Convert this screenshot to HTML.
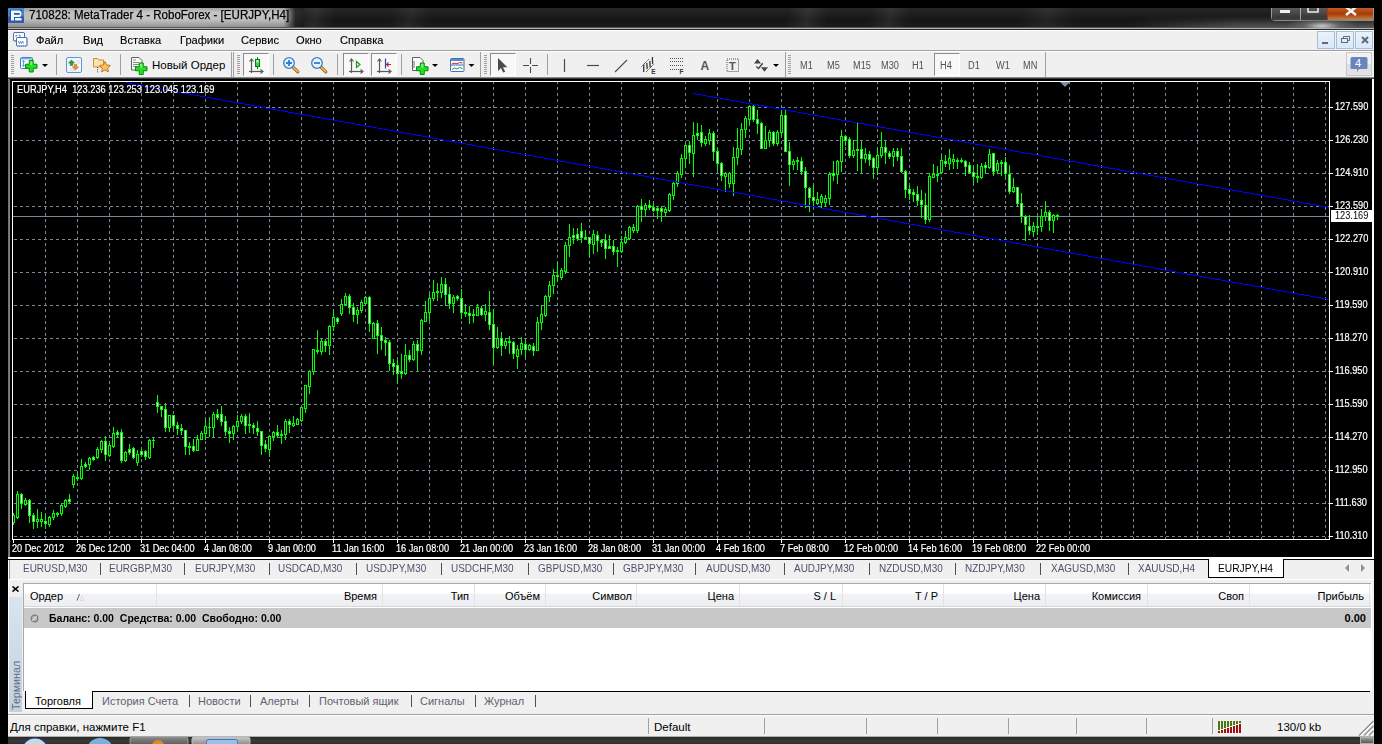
<!DOCTYPE html>
<html><head><meta charset="utf-8"><style>
html,body{margin:0;padding:0;}
body{width:1382px;height:744px;background:#000;position:relative;overflow:hidden;font-family:"Liberation Sans", sans-serif;}
.t{position:absolute;white-space:nowrap;line-height:1.15;font-family:"Liberation Sans", sans-serif;}
.b{position:absolute;}
</style></head><body>
<div class="b" style="left:8px;top:8px;width:1366px;height:20px;background:linear-gradient(#262626,#161616 60%,#1c1c1c);"></div><div class="b" style="left:8px;top:8px;width:1366px;height:20px;background:linear-gradient(100deg, rgba(255,255,255,0) 21%, rgba(255,255,255,.07) 22.5%, rgba(255,255,255,0) 24%, rgba(255,255,255,0) 28%, rgba(255,255,255,.06) 29.5%, rgba(255,255,255,0) 31%, rgba(255,255,255,0) 57%, rgba(255,255,255,.08) 58.5%, rgba(255,255,255,0) 60%, rgba(255,255,255,0) 63%, rgba(255,255,255,.07) 64.5%, rgba(255,255,255,0) 66%, rgba(255,255,255,0) 74%, rgba(255,255,255,.06) 76%, rgba(255,255,255,0) 78%);"></div><div class="b" style="left:8px;top:8px;width:296px;height:20px;background:linear-gradient(to bottom, rgba(0,0,0,.18) 0%, rgba(0,0,0,0) 22%, rgba(0,0,0,0) 55%, rgba(0,0,0,.28) 100%), linear-gradient(to right, #bcbcbc 0%, #c6c6c6 50%, #c0c0c0 93%, rgba(60,60,60,0.5) 97%, rgba(30,30,30,0) 100%);"></div><div class="b" style="left:8px;top:27px;width:1366px;height:1px;background:#555;"></div><div class="b" style="left:8px;top:28px;width:1366px;height:1px;background:#b4b4b4;"></div><svg class="b" style="left:8px;top:8px" width="16" height="15" viewBox="0 0 16 15">
<rect x="0" y="0" width="16" height="15" fill="#3a5cb0"/>
<rect x="0.5" y="0.5" width="15" height="8" fill="#6aa8e8"/>
<rect x="1.5" y="1.5" width="13" height="12" fill="#1f58a8"/>
<path d="M3 2.5 h8 a2.5 2.5 0 0 1 2.5 2.5 v1.5 a2.5 2.5 0 0 1 -2.5 2.5 h-5 v3.5 h-3z M6 5 v1.8 h5 a.9 .9 0 0 0 0 -1.8z" fill="#f4f8ff" fill-rule="evenodd"/>
<path d="M7 10 h6.5 v2.5 h-6.5z" fill="#f4f8ff"/>
</svg><div class="t" style="left:29px;top:9px;font-size:12px;color:#000;transform:scaleX(0.963);transform-origin:0 0;-webkit-text-stroke:0.25px #000;">710828: MetaTrader 4 - RoboForex - [EURJPY,H4]</div><svg class="b" style="left:1271px;top:8px" width="103" height="14" viewBox="0 0 103 14">
<path d="M0.5 0 V9.5 Q0.5 12.5 3.5 12.5 H102.5 V0" fill="#3a3a3a" stroke="#9a9a9a"/>
<rect x="1" y="0" width="28" height="12" fill="url(#gb)"/>
<rect x="30" y="0" width="26" height="12" fill="url(#gb)"/>
<line x1="29.5" y1="0" x2="29.5" y2="12" stroke="#aaa"/>
<line x1="56.5" y1="0" x2="56.5" y2="12" stroke="#c03000"/>
<rect x="57" y="0" width="45" height="12" fill="url(#gc)"/>
<rect x="9" y="2" width="10" height="3" fill="#f0f0f0"/>
<rect x="37" y="-1" width="10" height="5" fill="none" stroke="#f0f0f0" stroke-width="1.5"/>
<path d="M75 -1 L85 7 M85 -1 L75 7" stroke="#f4f4f4" stroke-width="2.5"/>
<defs>
<linearGradient id="gb" x1="0" y1="0" x2="0" y2="1"><stop offset="0" stop-color="#5a5a5a"/><stop offset="1" stop-color="#2e2e2e"/></linearGradient>
<linearGradient id="gc" x1="0" y1="0" x2="0" y2="1"><stop offset="0" stop-color="#c45a20"/><stop offset="0.5" stop-color="#a43c08"/><stop offset="1" stop-color="#d48a4a"/></linearGradient>
</defs>
</svg><div class="b" style="left:1130px;top:16px;width:244px;height:11px;background:linear-gradient(to bottom, rgba(90,90,90,0) 0%, rgba(100,100,100,.75) 100%);-webkit-mask-image:linear-gradient(to right, transparent 0%, #000 45%);"></div><div class="b" style="left:1240px;top:20px;width:134px;height:8px;background:radial-gradient(ellipse 36px 9px at 82px 6px, #c8c8c8, rgba(110,110,110,0.7) 50%, rgba(30,30,30,0) 100%);"></div><div class="b" style="left:8px;top:29px;width:1366px;height:1px;background:#2a2a2a;"></div><div class="b" style="left:8px;top:30px;width:1366px;height:1px;background:#fff;"></div><div class="b" style="left:8px;top:31px;width:1366px;height:19px;background:#f0f0f0;"></div><div class="b" style="left:8px;top:50px;width:1366px;height:1px;background:#a0a0a0;"></div><div class="b" style="left:8px;top:51px;width:1366px;height:1px;background:#fff;"></div><svg class="b" style="left:13px;top:32px" width="15" height="15" viewBox="0 0 15 15">
<rect x="0.5" y="0.5" width="11" height="8.5" rx="1" fill="#fff" stroke="#4a8af0" stroke-width="1"/>
<rect x="0.5" y="0.5" width="11" height="8.5" rx="1" fill="none" stroke="#555" stroke-width="1" stroke-dasharray="1 1"/>
<path d="M2.5 4.5 l1.5 -1.5 M6 3 l1.5 1.5" stroke="#4a8af0" stroke-width="1.2"/>
<rect x="3.5" y="5.5" width="10.5" height="8.5" rx="1" fill="#fff" stroke="#4a8af0" stroke-width="1"/>
<rect x="3.5" y="5.5" width="10.5" height="8.5" rx="1" fill="none" stroke="#555" stroke-width="1" stroke-dasharray="1 1"/>
<path d="M5.5 9 l1 2.5 l1 -2 l1 2 l1 -2.5 l1 2.5" fill="none" stroke="#4a8af0" stroke-width="1"/>
</svg><div class="t" style="left:36px;top:34px;font-size:11.5px;color:#000;transform:scaleX(0.965);transform-origin:0 0;-webkit-text-stroke:0.15px #000;">Файл</div><div class="t" style="left:83px;top:34px;font-size:11.5px;color:#000;transform:scaleX(0.965);transform-origin:0 0;-webkit-text-stroke:0.15px #000;">Вид</div><div class="t" style="left:120px;top:34px;font-size:11.5px;color:#000;transform:scaleX(0.965);transform-origin:0 0;-webkit-text-stroke:0.15px #000;">Вставка</div><div class="t" style="left:180px;top:34px;font-size:11.5px;color:#000;transform:scaleX(0.965);transform-origin:0 0;-webkit-text-stroke:0.15px #000;">Графики</div><div class="t" style="left:241px;top:34px;font-size:11.5px;color:#000;transform:scaleX(0.965);transform-origin:0 0;-webkit-text-stroke:0.15px #000;">Сервис</div><div class="t" style="left:296px;top:34px;font-size:11.5px;color:#000;transform:scaleX(0.965);transform-origin:0 0;-webkit-text-stroke:0.15px #000;">Окно</div><div class="t" style="left:340px;top:34px;font-size:11.5px;color:#000;transform:scaleX(0.965);transform-origin:0 0;-webkit-text-stroke:0.15px #000;">Справка</div><div class="b" style="left:1317px;top:31px;width:18px;height:18px;background:linear-gradient(#eaf2fb,#dae8f7);border:1px solid #a9bdd6;box-sizing:border-box;"></div><div class="b" style="left:1336px;top:31px;width:18px;height:18px;background:linear-gradient(#eaf2fb,#dae8f7);border:1px solid #a9bdd6;box-sizing:border-box;"></div><div class="b" style="left:1355px;top:31px;width:18px;height:18px;background:linear-gradient(#eaf2fb,#dae8f7);border:1px solid #a9bdd6;box-sizing:border-box;"></div><svg class="b" style="left:1317px;top:31px" width="56" height="18" viewBox="0 0 56 18">
<rect x="5" y="11" width="6" height="2" fill="#5b6b7b"/>
<rect x="24.5" y="7.5" width="6" height="4" fill="none" stroke="#5b6b7b"/>
<path d="M26.5 7.5 v-2 h6 v4 h-2" fill="none" stroke="#5b6b7b"/>
<path d="M45 6 l6 6 M51 6 l-6 6" stroke="#5b6b7b" stroke-width="2"/>
</svg><div class="b" style="left:8px;top:52px;width:1366px;height:25px;background:#f0f0f0;"></div><div class="b" style="left:8px;top:77px;width:1366px;height:1px;background:#8a8a8a;"></div><div class="b" style="left:8px;top:78px;width:1366px;height:1px;background:#383838;"></div><svg class="b" style="left:11px;top:55px" width="3" height="20"><g fill="#a0a0a0"><rect x="0" y="0" width="3" height="1"/><rect x="0" y="2" width="3" height="1"/><rect x="0" y="4" width="3" height="1"/><rect x="0" y="6" width="3" height="1"/><rect x="0" y="8" width="3" height="1"/><rect x="0" y="10" width="3" height="1"/><rect x="0" y="12" width="3" height="1"/><rect x="0" y="14" width="3" height="1"/><rect x="0" y="16" width="3" height="1"/><rect x="0" y="18" width="3" height="1"/></g></svg><div class="b" style="left:56px;top:54px;width:1px;height:21px;background:#a0a0a0;"></div><div class="b" style="left:120px;top:54px;width:1px;height:21px;background:#a0a0a0;"></div><div class="b" style="left:231px;top:52px;width:1px;height:25px;background:#a0a0a0;"></div><div class="b" style="left:233px;top:52px;width:1px;height:25px;background:#a0a0a0;"></div><svg class="b" style="left:237px;top:55px" width="3" height="20"><g fill="#a0a0a0"><rect x="0" y="0" width="3" height="1"/><rect x="0" y="2" width="3" height="1"/><rect x="0" y="4" width="3" height="1"/><rect x="0" y="6" width="3" height="1"/><rect x="0" y="8" width="3" height="1"/><rect x="0" y="10" width="3" height="1"/><rect x="0" y="12" width="3" height="1"/><rect x="0" y="14" width="3" height="1"/><rect x="0" y="16" width="3" height="1"/><rect x="0" y="18" width="3" height="1"/></g></svg><div class="b" style="left:243px;top:53px;width:26px;height:23px;background:#f8f8f8;border-top:1px solid #8c8c8c;border-left:1px solid #8c8c8c;border-right:1px solid #fff;border-bottom:1px solid #fff;box-sizing:border-box;"></div><div class="b" style="left:273px;top:54px;width:1px;height:21px;background:#a0a0a0;"></div><div class="b" style="left:337px;top:54px;width:1px;height:21px;background:#a0a0a0;"></div><div class="b" style="left:343px;top:53px;width:26px;height:23px;background:#f8f8f8;border-top:1px solid #8c8c8c;border-left:1px solid #8c8c8c;border-right:1px solid #fff;border-bottom:1px solid #fff;box-sizing:border-box;"></div><div class="b" style="left:371px;top:53px;width:26px;height:23px;background:#f8f8f8;border-top:1px solid #8c8c8c;border-left:1px solid #8c8c8c;border-right:1px solid #fff;border-bottom:1px solid #fff;box-sizing:border-box;"></div><div class="b" style="left:401px;top:54px;width:1px;height:21px;background:#a0a0a0;"></div><div class="b" style="left:480px;top:52px;width:1px;height:25px;background:#a0a0a0;"></div><svg class="b" style="left:484px;top:55px" width="3" height="20"><g fill="#a0a0a0"><rect x="0" y="0" width="3" height="1"/><rect x="0" y="2" width="3" height="1"/><rect x="0" y="4" width="3" height="1"/><rect x="0" y="6" width="3" height="1"/><rect x="0" y="8" width="3" height="1"/><rect x="0" y="10" width="3" height="1"/><rect x="0" y="12" width="3" height="1"/><rect x="0" y="14" width="3" height="1"/><rect x="0" y="16" width="3" height="1"/><rect x="0" y="18" width="3" height="1"/></g></svg><div class="b" style="left:490px;top:53px;width:26px;height:23px;background:#f8f8f8;border-top:1px solid #8c8c8c;border-left:1px solid #8c8c8c;border-right:1px solid #fff;border-bottom:1px solid #fff;box-sizing:border-box;"></div><div class="b" style="left:547px;top:54px;width:1px;height:21px;background:#a0a0a0;"></div><div class="b" style="left:785px;top:52px;width:1px;height:25px;background:#a0a0a0;"></div><svg class="b" style="left:788px;top:55px" width="3" height="20"><g fill="#a0a0a0"><rect x="0" y="0" width="3" height="1"/><rect x="0" y="2" width="3" height="1"/><rect x="0" y="4" width="3" height="1"/><rect x="0" y="6" width="3" height="1"/><rect x="0" y="8" width="3" height="1"/><rect x="0" y="10" width="3" height="1"/><rect x="0" y="12" width="3" height="1"/><rect x="0" y="14" width="3" height="1"/><rect x="0" y="16" width="3" height="1"/><rect x="0" y="18" width="3" height="1"/></g></svg><div class="b" style="left:934px;top:53px;width:26px;height:23px;background:#f8f8f8;border-top:1px solid #8c8c8c;border-left:1px solid #8c8c8c;border-right:1px solid #fff;border-bottom:1px solid #fff;box-sizing:border-box;"></div><div class="b" style="left:1045px;top:52px;width:1px;height:25px;background:#a0a0a0;"></div><svg class="b" style="left:0;top:0" width="1382" height="78" viewBox="0 0 1382 78" shape-rendering="geometricPrecision"><rect x="20.5" y="57.5" width="12" height="11" rx="1" fill="#f4f8fd" stroke="#3f7fcf"/><rect x="21" y="58" width="11" height="1.5" fill="#7fb0e8"/><path d="M23.5 60.5 v6 M22.2 61.8 l1.3 -1.3 l1.3 1.3 M22.2 65.2 l1.3 1.3 l1.3 -1.3" stroke="#5a8fd0" fill="none" stroke-width=".9"/><path d="M29.25 60.5 h4 v3.75 h3.75 v4 h-3.75 v3.75 h-4 v-3.75 h-3.75 v-4 h3.75z" fill="#22e022" stroke="#0a8a0a" stroke-width="1" stroke-linejoin="miter"/><rect x="30.05" y="61.3" width="2.4" height="3.75" fill="#b8f8b8" opacity=".6"/><path d="M42 64 h6 l-3 3z" fill="#000"/><rect x="66.5" y="57.5" width="15" height="15" rx="1.5" fill="#f2f6fb" stroke="#5f96d8"/><path d="M76 61 h4 M76 63 h4 M70 69 h5 M70 70.5 h5" stroke="#d8dde4"/><path d="M71.5 60 l3 3 h-1.8 v2.5 h-2.4 v-2.5 h-1.8z" fill="#2e9a3e" stroke="#1e7a2e" stroke-width=".6"/><path d="M75.5 70 l3 -3 h-1.8 v-2.5 h-2.4 v2.5 h-1.8z" fill="#e8903a" stroke="#b86a1a" stroke-width=".6"/><path d="M93.5 58.5 h4 l1.5 1.5 h4.5 v7 h-10z" fill="#fbe3a8" stroke="#c8903a"/><path d="M97.6 67 v6" stroke="#404040" stroke-dasharray="1 1.2"/><path d="M105 61.5 l1.7 3.5 l3.8 .5 l-2.8 2.6 l.7 3.8 l-3.4 -1.9 l-3.4 1.9 l.7 -3.8 l-2.8 -2.6 l3.8 -.5z" fill="#f8c060" stroke="#c87a20"/><path d="M131.5 57.5 h7.5 l3 3 v9.5 h-10.5z" fill="#fafafa" stroke="#606060"/><path d="M133 60 h3 M133 62.5 h6 M133 64.5 h6 M133 66.5 h4" stroke="#8a8a8a"/><path d="M139.25 63 h4 v3.75 h3.75 v4 h-3.75 v3.75 h-4 v-3.75 h-3.75 v-4 h3.75z" fill="#22e022" stroke="#0a8a0a" stroke-width="1" stroke-linejoin="miter"/><rect x="140.05" y="63.8" width="2.4" height="3.75" fill="#b8f8b8" opacity=".6"/><path d="M251.5 59 V73" stroke="#5a5a5a" stroke-width="1.2"/><path d="M249.5 61.5 L251.5 59 L253.5 61.5" fill="none" stroke="#5a5a5a" stroke-width="1.1"/><path d="M249 71.5 H263" stroke="#5a5a5a" stroke-width="1.2"/><path d="M260.5 69.5 L263 71.5 L260.5 73.5" fill="none" stroke="#5a5a5a" stroke-width="1.1"/><path d="M257.5 57 v12" stroke="#0a7a0a"/><rect x="255.5" y="59.5" width="4" height="7" fill="#30e030" stroke="#0a7a0a"/><rect x="256" y="60" width="3" height="2.5" fill="#b0e8b0"/><path d="M292.8 66.8 l5 5" stroke="#a05a10" stroke-width="3.2" stroke-linecap="round"/><path d="M292.8 66.8 l5 5" stroke="#f0c060" stroke-width="1.6" stroke-linecap="round"/><circle cx="289" cy="63" r="5.3" fill="#e4f4fc" stroke="#3a7ccc" stroke-width="1.3"/><path d="M286 63 h6 M289 60 v6" stroke="#3a7ccc" stroke-width="1.8"/><path d="M320.8 66.8 l5 5" stroke="#a05a10" stroke-width="3.2" stroke-linecap="round"/><path d="M320.8 66.8 l5 5" stroke="#f0c060" stroke-width="1.6" stroke-linecap="round"/><circle cx="317" cy="63" r="5.3" fill="#e4f4fc" stroke="#3a7ccc" stroke-width="1.3"/><path d="M314 63 h6" stroke="#3a7ccc" stroke-width="1.8"/><path d="M351.5 59 V73" stroke="#5a5a5a" stroke-width="1.2"/><path d="M349.5 61.5 L351.5 59 L353.5 61.5" fill="none" stroke="#5a5a5a" stroke-width="1.1"/><path d="M349 71.5 H363" stroke="#5a5a5a" stroke-width="1.2"/><path d="M360.5 69.5 L363 71.5 L360.5 73.5" fill="none" stroke="#5a5a5a" stroke-width="1.1"/><path d="M356.5 61.5 l3.5 3 l-3.5 3z" fill="none" stroke="#1a9a1a" stroke-width="1.2"/><path d="M379.5 59 V73" stroke="#5a5a5a" stroke-width="1.2"/><path d="M377.5 61.5 L379.5 59 L381.5 61.5" fill="none" stroke="#5a5a5a" stroke-width="1.1"/><path d="M377 71.5 H391" stroke="#5a5a5a" stroke-width="1.2"/><path d="M388.5 69.5 L391 71.5 L388.5 73.5" fill="none" stroke="#5a5a5a" stroke-width="1.1"/><path d="M385.5 58.5 v10" stroke="#1a4ab0" stroke-width="1.2"/><path d="M391 64.5 h-4.5 M388.5 62.5 l-2 2 l2 2" fill="none" stroke="#c02020" stroke-width="1.1"/><path d="M412.5 57.5 h7.5 l3 3 v10 h-10.5z" fill="#fafafa" stroke="#606060"/><path d="M414 61 v7" stroke="#707070"/><path d="M420.25 63 h4 v3.75 h3.75 v4 h-3.75 v3.75 h-4 v-3.75 h-3.75 v-4 h3.75z" fill="#22e022" stroke="#0a8a0a" stroke-width="1" stroke-linejoin="miter"/><rect x="421.05" y="63.8" width="2.4" height="3.75" fill="#b8f8b8" opacity=".6"/><path d="M432 64 h6 l-3 3z" fill="#000"/><rect x="450.5" y="58.5" width="13.5" height="13" rx="1" fill="#fafcff" stroke="#3f6fb8"/><rect x="451" y="59" width="12.5" height="2" fill="#5a8ad0"/><path d="M451 65 h12.5" stroke="#3f6fb8"/><path d="M452 63.8 l2.5 -.6 l2.5 .6 l2.5 -1.2 l3 .3" fill="none" stroke="#c03020"/><path d="M452 69.5 l2.5 -1.5 l2.5 1 l2.5 -1.5 l3 1.2" fill="none" stroke="#20a030"/><path d="M468.5 64 h6 l-3 3z" fill="#000"/><path d="M498 58 v13 l3 -3 l2.2 4.6 l2 -.9 l-2.2 -4.5 h4.3z" fill="#4a4a4a"/><path d="M530.5 58 v6 M530.5 67 v6 M523 65.5 h6 M532 65.5 h6" stroke="#4a4a4a" stroke-width="1.1"/><path d="M564.5 59 v13" stroke="#4a4a4a" stroke-width="1.2"/><path d="M587 65.5 h12" stroke="#4a4a4a" stroke-width="1.2"/><path d="M615 72 l12 -12" stroke="#4a4a4a" stroke-width="1.1"/><path d="M641.5 66.5 L649 59 M646 72 L654 64" stroke="#444" stroke-width="1" stroke-dasharray="1.2 .6"/><path d="M643.5 72 C644.5 69 643 67 644 64.5 M647 69 C647.5 67 646.5 65 647 63 M650 67.5 C650.5 65 649.5 63 650 61 M652.5 64 C653 62 652 60 652.5 57" stroke="#333" stroke-width="1.3" fill="none"/><text x="651.3" y="73.8" font-size="6.5" font-weight="bold" fill="#333" font-family="Liberation Sans">E</text><path d="M670 58.5 h13 M670 61.5 h13 M670 65.5 h13 M670 69.5 h9" stroke="#555" stroke-dasharray="1 1"/><text x="679.6" y="73.8" font-size="6.5" font-weight="bold" fill="#333" font-family="Liberation Sans">F</text><text x="700.5" y="70" font-size="12" font-weight="bold" fill="#555" font-family="Liberation Sans">A</text><rect x="727" y="59" width="11.5" height="12.5" fill="none" stroke="#555" stroke-dasharray="1 1"/><text x="729" y="70" font-size="11" font-weight="bold" fill="#555" font-family="Liberation Sans">T</text><path d="M754 63.5 l3.5 -4.5 l3.5 4.5z M761 67.3 h7 l-3.5 4.5z" fill="#444"/><path d="M756.3 66.4 l2.3 2.1 l4.1 -5.3" fill="none" stroke="#444" stroke-width="1.4"/><path d="M773 64 h6 l-3 3z" fill="#000"/><rect x="1346.5" y="52.5" width="25" height="23" fill="url(#g4)" stroke="#c8c8c8"/><path d="M1352 57 h14 a1.5 1.5 0 0 1 1.5 1.5 v9 a1.5 1.5 0 0 1 -1.5 1.5 h-7 l-2 3 v-3 h-5 a1.5 1.5 0 0 1 -1.5 -1.5 v-9 a1.5 1.5 0 0 1 1.5 -1.5z" fill="#6a84be"/><text x="1355" y="67" font-size="11" fill="#fff" font-family="Liberation Sans">4</text><defs><linearGradient id="g4" x1="0" y1="0" x2="0" y2="1"><stop offset="0" stop-color="#f2f2f2"/><stop offset=".5" stop-color="#f2f2f2"/><stop offset=".5" stop-color="#dedede"/><stop offset="1" stop-color="#e4e4e4"/></linearGradient></defs></svg><div class="t" style="left:152px;top:59px;font-size:11.5px;color:#000;">Новый Ордер</div><div class="t" style="left:800px;top:60px;font-size:10px;color:#505050;transform:scaleX(0.92);transform-origin:0 0;">M1</div><div class="t" style="left:827px;top:60px;font-size:10px;color:#505050;transform:scaleX(0.92);transform-origin:0 0;">M5</div><div class="t" style="left:853px;top:60px;font-size:10px;color:#505050;transform:scaleX(0.92);transform-origin:0 0;">M15</div><div class="t" style="left:881px;top:60px;font-size:10px;color:#505050;transform:scaleX(0.92);transform-origin:0 0;">M30</div><div class="t" style="left:912px;top:60px;font-size:10px;color:#505050;transform:scaleX(0.92);transform-origin:0 0;">H1</div><div class="t" style="left:940px;top:60px;font-size:10px;color:#505050;transform:scaleX(0.92);transform-origin:0 0;">H4</div><div class="t" style="left:968px;top:60px;font-size:10px;color:#505050;transform:scaleX(0.92);transform-origin:0 0;">D1</div><div class="t" style="left:996px;top:60px;font-size:10px;color:#505050;transform:scaleX(0.92);transform-origin:0 0;">W1</div><div class="t" style="left:1023px;top:60px;font-size:10px;color:#505050;transform:scaleX(0.92);transform-origin:0 0;">MN</div><div class="b" style="left:8px;top:79px;width:1366px;height:480px;background:#000;"></div><div class="b" style="left:8px;top:79px;width:2px;height:478px;background:linear-gradient(to right,#6a6a6a,#8a8a8a);"></div><svg class="b" style="left:0;top:0" width="1382" height="560" viewBox="0 0 1382 560" shape-rendering="crispEdges"><line x1="14" y1="107.5" x2="1329" y2="107.5" stroke="#778899" stroke-dasharray="3 3"/><line x1="14" y1="140.5" x2="1329" y2="140.5" stroke="#778899" stroke-dasharray="3 3"/><line x1="14" y1="173.5" x2="1329" y2="173.5" stroke="#778899" stroke-dasharray="3 3"/><line x1="14" y1="206.5" x2="1329" y2="206.5" stroke="#778899" stroke-dasharray="3 3"/><line x1="14" y1="239.5" x2="1329" y2="239.5" stroke="#778899" stroke-dasharray="3 3"/><line x1="14" y1="272.5" x2="1329" y2="272.5" stroke="#778899" stroke-dasharray="3 3"/><line x1="14" y1="305.5" x2="1329" y2="305.5" stroke="#778899" stroke-dasharray="3 3"/><line x1="14" y1="338.5" x2="1329" y2="338.5" stroke="#778899" stroke-dasharray="3 3"/><line x1="14" y1="371.5" x2="1329" y2="371.5" stroke="#778899" stroke-dasharray="3 3"/><line x1="14" y1="404.5" x2="1329" y2="404.5" stroke="#778899" stroke-dasharray="3 3"/><line x1="14" y1="437.5" x2="1329" y2="437.5" stroke="#778899" stroke-dasharray="3 3"/><line x1="14" y1="470.5" x2="1329" y2="470.5" stroke="#778899" stroke-dasharray="3 3"/><line x1="14" y1="503.5" x2="1329" y2="503.5" stroke="#778899" stroke-dasharray="3 3"/><line x1="14" y1="536.5" x2="1329" y2="536.5" stroke="#778899" stroke-dasharray="3 3"/><line x1="45.5" y1="81" x2="45.5" y2="539" stroke="#778899" stroke-dasharray="3 3"/><line x1="77.5" y1="81" x2="77.5" y2="539" stroke="#778899" stroke-dasharray="3 3"/><line x1="109.5" y1="81" x2="109.5" y2="539" stroke="#778899" stroke-dasharray="3 3"/><line x1="141.5" y1="81" x2="141.5" y2="539" stroke="#778899" stroke-dasharray="3 3"/><line x1="173.5" y1="81" x2="173.5" y2="539" stroke="#778899" stroke-dasharray="3 3"/><line x1="205.5" y1="81" x2="205.5" y2="539" stroke="#778899" stroke-dasharray="3 3"/><line x1="237.5" y1="81" x2="237.5" y2="539" stroke="#778899" stroke-dasharray="3 3"/><line x1="269.5" y1="81" x2="269.5" y2="539" stroke="#778899" stroke-dasharray="3 3"/><line x1="301.5" y1="81" x2="301.5" y2="539" stroke="#778899" stroke-dasharray="3 3"/><line x1="333.5" y1="81" x2="333.5" y2="539" stroke="#778899" stroke-dasharray="3 3"/><line x1="365.5" y1="81" x2="365.5" y2="539" stroke="#778899" stroke-dasharray="3 3"/><line x1="397.5" y1="81" x2="397.5" y2="539" stroke="#778899" stroke-dasharray="3 3"/><line x1="429.5" y1="81" x2="429.5" y2="539" stroke="#778899" stroke-dasharray="3 3"/><line x1="461.5" y1="81" x2="461.5" y2="539" stroke="#778899" stroke-dasharray="3 3"/><line x1="493.5" y1="81" x2="493.5" y2="539" stroke="#778899" stroke-dasharray="3 3"/><line x1="525.5" y1="81" x2="525.5" y2="539" stroke="#778899" stroke-dasharray="3 3"/><line x1="557.5" y1="81" x2="557.5" y2="539" stroke="#778899" stroke-dasharray="3 3"/><line x1="589.5" y1="81" x2="589.5" y2="539" stroke="#778899" stroke-dasharray="3 3"/><line x1="621.5" y1="81" x2="621.5" y2="539" stroke="#778899" stroke-dasharray="3 3"/><line x1="653.5" y1="81" x2="653.5" y2="539" stroke="#778899" stroke-dasharray="3 3"/><line x1="685.5" y1="81" x2="685.5" y2="539" stroke="#778899" stroke-dasharray="3 3"/><line x1="717.5" y1="81" x2="717.5" y2="539" stroke="#778899" stroke-dasharray="3 3"/><line x1="749.5" y1="81" x2="749.5" y2="539" stroke="#778899" stroke-dasharray="3 3"/><line x1="781.5" y1="81" x2="781.5" y2="539" stroke="#778899" stroke-dasharray="3 3"/><line x1="813.5" y1="81" x2="813.5" y2="539" stroke="#778899" stroke-dasharray="3 3"/><line x1="845.5" y1="81" x2="845.5" y2="539" stroke="#778899" stroke-dasharray="3 3"/><line x1="877.5" y1="81" x2="877.5" y2="539" stroke="#778899" stroke-dasharray="3 3"/><line x1="909.5" y1="81" x2="909.5" y2="539" stroke="#778899" stroke-dasharray="3 3"/><line x1="941.5" y1="81" x2="941.5" y2="539" stroke="#778899" stroke-dasharray="3 3"/><line x1="973.5" y1="81" x2="973.5" y2="539" stroke="#778899" stroke-dasharray="3 3"/><line x1="1005.5" y1="81" x2="1005.5" y2="539" stroke="#778899" stroke-dasharray="3 3"/><line x1="1037.5" y1="81" x2="1037.5" y2="539" stroke="#778899" stroke-dasharray="3 3"/><line x1="1069.5" y1="81" x2="1069.5" y2="539" stroke="#778899" stroke-dasharray="3 3"/><line x1="1101.5" y1="81" x2="1101.5" y2="539" stroke="#778899" stroke-dasharray="3 3"/><line x1="1133.5" y1="81" x2="1133.5" y2="539" stroke="#778899" stroke-dasharray="3 3"/><line x1="1165.5" y1="81" x2="1165.5" y2="539" stroke="#778899" stroke-dasharray="3 3"/><line x1="1197.5" y1="81" x2="1197.5" y2="539" stroke="#778899" stroke-dasharray="3 3"/><line x1="1229.5" y1="81" x2="1229.5" y2="539" stroke="#778899" stroke-dasharray="3 3"/><line x1="1261.5" y1="81" x2="1261.5" y2="539" stroke="#778899" stroke-dasharray="3 3"/><line x1="1293.5" y1="81" x2="1293.5" y2="539" stroke="#778899" stroke-dasharray="3 3"/><line x1="1325.5" y1="81" x2="1325.5" y2="539" stroke="#778899" stroke-dasharray="3 3"/><rect x="1372" y="79" width="2" height="480" fill="#fff"/><rect x="8" y="557" width="1366" height="2" fill="#fff"/><line x1="1330" y1="107.5" x2="1333" y2="107.5" stroke="#fff"/><line x1="1330" y1="140.5" x2="1333" y2="140.5" stroke="#fff"/><line x1="1330" y1="173.5" x2="1333" y2="173.5" stroke="#fff"/><line x1="1330" y1="206.5" x2="1333" y2="206.5" stroke="#fff"/><line x1="1330" y1="239.5" x2="1333" y2="239.5" stroke="#fff"/><line x1="1330" y1="272.5" x2="1333" y2="272.5" stroke="#fff"/><line x1="1330" y1="305.5" x2="1333" y2="305.5" stroke="#fff"/><line x1="1330" y1="338.5" x2="1333" y2="338.5" stroke="#fff"/><line x1="1330" y1="371.5" x2="1333" y2="371.5" stroke="#fff"/><line x1="1330" y1="404.5" x2="1333" y2="404.5" stroke="#fff"/><line x1="1330" y1="437.5" x2="1333" y2="437.5" stroke="#fff"/><line x1="1330" y1="470.5" x2="1333" y2="470.5" stroke="#fff"/><line x1="1330" y1="503.5" x2="1333" y2="503.5" stroke="#fff"/><line x1="1330" y1="536.5" x2="1333" y2="536.5" stroke="#fff"/><line x1="13.5" y1="540" x2="13.5" y2="543" stroke="#fff"/><line x1="77.5" y1="540" x2="77.5" y2="543" stroke="#fff"/><line x1="141.5" y1="540" x2="141.5" y2="543" stroke="#fff"/><line x1="205.5" y1="540" x2="205.5" y2="543" stroke="#fff"/><line x1="269.5" y1="540" x2="269.5" y2="543" stroke="#fff"/><line x1="333.5" y1="540" x2="333.5" y2="543" stroke="#fff"/><line x1="397.5" y1="540" x2="397.5" y2="543" stroke="#fff"/><line x1="461.5" y1="540" x2="461.5" y2="543" stroke="#fff"/><line x1="525.5" y1="540" x2="525.5" y2="543" stroke="#fff"/><line x1="589.5" y1="540" x2="589.5" y2="543" stroke="#fff"/><line x1="653.5" y1="540" x2="653.5" y2="543" stroke="#fff"/><line x1="717.5" y1="540" x2="717.5" y2="543" stroke="#fff"/><line x1="781.5" y1="540" x2="781.5" y2="543" stroke="#fff"/><line x1="845.5" y1="540" x2="845.5" y2="543" stroke="#fff"/><line x1="909.5" y1="540" x2="909.5" y2="543" stroke="#fff"/><line x1="973.5" y1="540" x2="973.5" y2="543" stroke="#fff"/><line x1="1037.5" y1="540" x2="1037.5" y2="543" stroke="#fff"/><line x1="13" y1="216.5" x2="1329" y2="216.5" stroke="#778899"/><rect x="13" y="513" width="1" height="12" fill="#00ff00"/><rect x="12" y="515" width="3" height="8" fill="#00ff00"/><rect x="13" y="516" width="1" height="6" fill="#000"/><rect x="17" y="491" width="1" height="28" fill="#00ff00"/><rect x="16" y="494" width="3" height="24" fill="#00ff00"/><rect x="17" y="495" width="1" height="22" fill="#000"/><rect x="21" y="493" width="1" height="16" fill="#00ff00"/><rect x="20" y="494" width="3" height="10" fill="#00ff00"/><rect x="21" y="495" width="1" height="8" fill="#fff"/><rect x="25" y="498" width="1" height="8" fill="#00ff00"/><rect x="24" y="500" width="3" height="5" fill="#00ff00"/><rect x="25" y="501" width="1" height="3" fill="#000"/><rect x="29" y="499" width="1" height="24" fill="#00ff00"/><rect x="28" y="500" width="3" height="16" fill="#00ff00"/><rect x="29" y="501" width="1" height="14" fill="#fff"/><rect x="33" y="513" width="1" height="16" fill="#00ff00"/><rect x="32" y="515" width="3" height="7" fill="#00ff00"/><rect x="33" y="516" width="1" height="5" fill="#fff"/><rect x="37" y="509" width="1" height="19" fill="#00ff00"/><rect x="36" y="519" width="3" height="3" fill="#00ff00"/><rect x="37" y="520" width="1" height="1" fill="#000"/><rect x="41" y="512" width="1" height="15" fill="#00ff00"/><rect x="40" y="519" width="3" height="3" fill="#00ff00"/><rect x="41" y="520" width="1" height="1" fill="#000"/><rect x="45" y="514" width="1" height="15" fill="#00ff00"/><rect x="44" y="521" width="3" height="3" fill="#00ff00"/><rect x="45" y="522" width="1" height="1" fill="#fff"/><rect x="49" y="516" width="1" height="11" fill="#00ff00"/><rect x="48" y="517" width="3" height="8" fill="#00ff00"/><rect x="49" y="518" width="1" height="6" fill="#000"/><rect x="53" y="510" width="1" height="10" fill="#00ff00"/><rect x="52" y="513" width="3" height="5" fill="#00ff00"/><rect x="53" y="514" width="1" height="3" fill="#000"/><rect x="57" y="512" width="1" height="5" fill="#00ff00"/><rect x="56" y="513" width="3" height="2" fill="#00ff00"/><rect x="61" y="503" width="1" height="13" fill="#00ff00"/><rect x="60" y="505" width="3" height="9" fill="#00ff00"/><rect x="61" y="506" width="1" height="7" fill="#000"/><rect x="65" y="499" width="1" height="9" fill="#00ff00"/><rect x="64" y="500" width="3" height="7" fill="#00ff00"/><rect x="65" y="501" width="1" height="5" fill="#000"/><rect x="69" y="494" width="1" height="10" fill="#00ff00"/><rect x="68" y="499" width="3" height="3" fill="#00ff00"/><rect x="69" y="500" width="1" height="1" fill="#fff"/><rect x="73" y="474" width="1" height="14" fill="#00ff00"/><rect x="72" y="476" width="3" height="9" fill="#00ff00"/><rect x="73" y="477" width="1" height="7" fill="#000"/><rect x="77" y="472" width="1" height="9" fill="#00ff00"/><rect x="76" y="477" width="3" height="2" fill="#00ff00"/><rect x="81" y="459" width="1" height="21" fill="#00ff00"/><rect x="80" y="466" width="3" height="13" fill="#00ff00"/><rect x="81" y="467" width="1" height="11" fill="#000"/><rect x="85" y="462" width="1" height="6" fill="#00ff00"/><rect x="84" y="464" width="3" height="3" fill="#00ff00"/><rect x="85" y="465" width="1" height="1" fill="#fff"/><rect x="89" y="457" width="1" height="13" fill="#00ff00"/><rect x="88" y="458" width="3" height="7" fill="#00ff00"/><rect x="89" y="459" width="1" height="5" fill="#000"/><rect x="93" y="456" width="1" height="5" fill="#00ff00"/><rect x="92" y="457" width="3" height="3" fill="#00ff00"/><rect x="93" y="458" width="1" height="1" fill="#fff"/><rect x="97" y="447" width="1" height="12" fill="#00ff00"/><rect x="96" y="449" width="3" height="9" fill="#00ff00"/><rect x="97" y="450" width="1" height="7" fill="#000"/><rect x="101" y="440" width="1" height="13" fill="#00ff00"/><rect x="100" y="441" width="3" height="9" fill="#00ff00"/><rect x="101" y="442" width="1" height="7" fill="#000"/><rect x="105" y="436" width="1" height="25" fill="#00ff00"/><rect x="104" y="441" width="3" height="14" fill="#00ff00"/><rect x="105" y="442" width="1" height="12" fill="#fff"/><rect x="109" y="443" width="1" height="14" fill="#00ff00"/><rect x="108" y="445" width="3" height="11" fill="#00ff00"/><rect x="109" y="446" width="1" height="9" fill="#000"/><rect x="113" y="427" width="1" height="21" fill="#00ff00"/><rect x="112" y="433" width="3" height="14" fill="#00ff00"/><rect x="113" y="434" width="1" height="12" fill="#000"/><rect x="117" y="430" width="1" height="8" fill="#00ff00"/><rect x="116" y="432" width="3" height="3" fill="#00ff00"/><rect x="117" y="433" width="1" height="1" fill="#fff"/><rect x="121" y="429" width="1" height="34" fill="#00ff00"/><rect x="120" y="432" width="3" height="29" fill="#00ff00"/><rect x="121" y="433" width="1" height="27" fill="#fff"/><rect x="125" y="451" width="1" height="11" fill="#00ff00"/><rect x="124" y="452" width="3" height="9" fill="#00ff00"/><rect x="125" y="453" width="1" height="7" fill="#000"/><rect x="129" y="444" width="1" height="11" fill="#00ff00"/><rect x="128" y="449" width="3" height="4" fill="#00ff00"/><rect x="129" y="450" width="1" height="2" fill="#fff"/><rect x="133" y="447" width="1" height="12" fill="#00ff00"/><rect x="132" y="448" width="3" height="10" fill="#00ff00"/><rect x="133" y="449" width="1" height="8" fill="#fff"/><rect x="137" y="450" width="1" height="16" fill="#00ff00"/><rect x="136" y="454" width="3" height="9" fill="#00ff00"/><rect x="137" y="455" width="1" height="7" fill="#000"/><rect x="141" y="449" width="1" height="8" fill="#00ff00"/><rect x="140" y="451" width="3" height="4" fill="#00ff00"/><rect x="141" y="452" width="1" height="2" fill="#fff"/><rect x="145" y="450" width="1" height="10" fill="#00ff00"/><rect x="144" y="451" width="3" height="6" fill="#00ff00"/><rect x="145" y="452" width="1" height="4" fill="#fff"/><rect x="149" y="439" width="1" height="20" fill="#00ff00"/><rect x="148" y="440" width="3" height="18" fill="#00ff00"/><rect x="149" y="441" width="1" height="16" fill="#000"/><rect x="153" y="438" width="1" height="10" fill="#00ff00"/><rect x="152" y="440" width="3" height="1" fill="#00ff00"/><rect x="157" y="395" width="1" height="18" fill="#00ff00"/><rect x="156" y="402" width="3" height="5" fill="#00ff00"/><rect x="157" y="403" width="1" height="3" fill="#fff"/><rect x="161" y="406" width="1" height="11" fill="#00ff00"/><rect x="160" y="406" width="3" height="4" fill="#00ff00"/><rect x="161" y="407" width="1" height="2" fill="#fff"/><rect x="165" y="403" width="1" height="29" fill="#00ff00"/><rect x="164" y="409" width="3" height="19" fill="#00ff00"/><rect x="165" y="410" width="1" height="17" fill="#fff"/><rect x="169" y="415" width="1" height="17" fill="#00ff00"/><rect x="168" y="415" width="3" height="13" fill="#00ff00"/><rect x="169" y="416" width="1" height="11" fill="#000"/><rect x="173" y="415" width="1" height="15" fill="#00ff00"/><rect x="172" y="415" width="3" height="11" fill="#00ff00"/><rect x="173" y="416" width="1" height="9" fill="#fff"/><rect x="177" y="422" width="1" height="13" fill="#00ff00"/><rect x="176" y="425" width="3" height="4" fill="#00ff00"/><rect x="177" y="426" width="1" height="2" fill="#fff"/><rect x="181" y="424" width="1" height="11" fill="#00ff00"/><rect x="180" y="428" width="3" height="3" fill="#00ff00"/><rect x="181" y="429" width="1" height="1" fill="#fff"/><rect x="185" y="430" width="1" height="25" fill="#00ff00"/><rect x="184" y="430" width="3" height="17" fill="#00ff00"/><rect x="185" y="431" width="1" height="15" fill="#fff"/><rect x="189" y="442" width="1" height="13" fill="#00ff00"/><rect x="188" y="446" width="3" height="2" fill="#00ff00"/><rect x="193" y="439" width="1" height="13" fill="#00ff00"/><rect x="192" y="446" width="3" height="5" fill="#00ff00"/><rect x="193" y="447" width="1" height="3" fill="#fff"/><rect x="197" y="435" width="1" height="16" fill="#00ff00"/><rect x="196" y="439" width="3" height="12" fill="#00ff00"/><rect x="197" y="440" width="1" height="10" fill="#000"/><rect x="201" y="431" width="1" height="9" fill="#00ff00"/><rect x="200" y="433" width="3" height="7" fill="#00ff00"/><rect x="201" y="434" width="1" height="5" fill="#000"/><rect x="205" y="420" width="1" height="20" fill="#00ff00"/><rect x="204" y="426" width="3" height="8" fill="#00ff00"/><rect x="205" y="427" width="1" height="6" fill="#000"/><rect x="209" y="417" width="1" height="20" fill="#00ff00"/><rect x="208" y="427" width="3" height="1" fill="#00ff00"/><rect x="213" y="412" width="1" height="26" fill="#00ff00"/><rect x="212" y="414" width="3" height="14" fill="#00ff00"/><rect x="213" y="415" width="1" height="12" fill="#000"/><rect x="217" y="409" width="1" height="11" fill="#00ff00"/><rect x="216" y="414" width="3" height="4" fill="#00ff00"/><rect x="217" y="415" width="1" height="2" fill="#fff"/><rect x="221" y="406" width="1" height="20" fill="#00ff00"/><rect x="220" y="414" width="3" height="8" fill="#00ff00"/><rect x="221" y="415" width="1" height="6" fill="#fff"/><rect x="225" y="416" width="1" height="20" fill="#00ff00"/><rect x="224" y="421" width="3" height="11" fill="#00ff00"/><rect x="225" y="422" width="1" height="9" fill="#fff"/><rect x="229" y="427" width="1" height="16" fill="#00ff00"/><rect x="228" y="431" width="3" height="3" fill="#00ff00"/><rect x="229" y="432" width="1" height="1" fill="#fff"/><rect x="233" y="425" width="1" height="15" fill="#00ff00"/><rect x="232" y="426" width="3" height="8" fill="#00ff00"/><rect x="233" y="427" width="1" height="6" fill="#000"/><rect x="237" y="415" width="1" height="17" fill="#00ff00"/><rect x="236" y="421" width="3" height="6" fill="#00ff00"/><rect x="237" y="422" width="1" height="4" fill="#000"/><rect x="241" y="414" width="1" height="10" fill="#00ff00"/><rect x="240" y="416" width="3" height="6" fill="#00ff00"/><rect x="241" y="417" width="1" height="4" fill="#000"/><rect x="245" y="414" width="1" height="20" fill="#00ff00"/><rect x="244" y="416" width="3" height="10" fill="#00ff00"/><rect x="245" y="417" width="1" height="8" fill="#fff"/><rect x="249" y="413" width="1" height="20" fill="#00ff00"/><rect x="248" y="424" width="3" height="2" fill="#00ff00"/><rect x="253" y="423" width="1" height="11" fill="#00ff00"/><rect x="252" y="425" width="3" height="3" fill="#00ff00"/><rect x="253" y="426" width="1" height="1" fill="#fff"/><rect x="257" y="421" width="1" height="15" fill="#00ff00"/><rect x="256" y="428" width="3" height="4" fill="#00ff00"/><rect x="257" y="429" width="1" height="2" fill="#fff"/><rect x="261" y="431" width="1" height="24" fill="#00ff00"/><rect x="260" y="431" width="3" height="15" fill="#00ff00"/><rect x="261" y="432" width="1" height="13" fill="#fff"/><rect x="265" y="440" width="1" height="12" fill="#00ff00"/><rect x="264" y="444" width="3" height="5" fill="#00ff00"/><rect x="265" y="445" width="1" height="3" fill="#fff"/><rect x="269" y="435" width="1" height="22" fill="#00ff00"/><rect x="268" y="436" width="3" height="14" fill="#00ff00"/><rect x="269" y="437" width="1" height="12" fill="#000"/><rect x="273" y="431" width="1" height="10" fill="#00ff00"/><rect x="272" y="432" width="3" height="5" fill="#00ff00"/><rect x="273" y="433" width="1" height="3" fill="#000"/><rect x="277" y="425" width="1" height="13" fill="#00ff00"/><rect x="276" y="432" width="3" height="4" fill="#00ff00"/><rect x="277" y="433" width="1" height="2" fill="#fff"/><rect x="281" y="430" width="1" height="14" fill="#00ff00"/><rect x="280" y="434" width="3" height="2" fill="#00ff00"/><rect x="285" y="419" width="1" height="21" fill="#00ff00"/><rect x="284" y="421" width="3" height="14" fill="#00ff00"/><rect x="285" y="422" width="1" height="12" fill="#000"/><rect x="289" y="419" width="1" height="14" fill="#00ff00"/><rect x="288" y="421" width="3" height="4" fill="#00ff00"/><rect x="289" y="422" width="1" height="2" fill="#fff"/><rect x="293" y="416" width="1" height="11" fill="#00ff00"/><rect x="292" y="423" width="3" height="3" fill="#00ff00"/><rect x="293" y="424" width="1" height="1" fill="#000"/><rect x="297" y="418" width="1" height="7" fill="#00ff00"/><rect x="296" y="419" width="3" height="6" fill="#00ff00"/><rect x="297" y="420" width="1" height="4" fill="#000"/><rect x="301" y="407" width="1" height="15" fill="#00ff00"/><rect x="300" y="407" width="3" height="14" fill="#00ff00"/><rect x="301" y="408" width="1" height="12" fill="#000"/><rect x="305" y="385" width="1" height="28" fill="#00ff00"/><rect x="304" y="385" width="3" height="24" fill="#00ff00"/><rect x="305" y="386" width="1" height="22" fill="#000"/><rect x="309" y="370" width="1" height="24" fill="#00ff00"/><rect x="308" y="371" width="3" height="16" fill="#00ff00"/><rect x="309" y="372" width="1" height="14" fill="#000"/><rect x="313" y="349" width="1" height="26" fill="#00ff00"/><rect x="312" y="349" width="3" height="23" fill="#00ff00"/><rect x="313" y="350" width="1" height="21" fill="#000"/><rect x="317" y="330" width="1" height="24" fill="#00ff00"/><rect x="316" y="350" width="3" height="2" fill="#00ff00"/><rect x="321" y="339" width="1" height="16" fill="#00ff00"/><rect x="320" y="341" width="3" height="11" fill="#00ff00"/><rect x="321" y="342" width="1" height="9" fill="#000"/><rect x="325" y="339" width="1" height="13" fill="#00ff00"/><rect x="324" y="341" width="3" height="5" fill="#00ff00"/><rect x="325" y="342" width="1" height="3" fill="#fff"/><rect x="329" y="325" width="1" height="30" fill="#00ff00"/><rect x="328" y="326" width="3" height="20" fill="#00ff00"/><rect x="329" y="327" width="1" height="18" fill="#000"/><rect x="333" y="310" width="1" height="21" fill="#00ff00"/><rect x="332" y="317" width="3" height="10" fill="#00ff00"/><rect x="333" y="318" width="1" height="8" fill="#000"/><rect x="337" y="317" width="1" height="7" fill="#00ff00"/><rect x="336" y="318" width="3" height="4" fill="#00ff00"/><rect x="337" y="319" width="1" height="2" fill="#fff"/><rect x="341" y="299" width="1" height="17" fill="#00ff00"/><rect x="340" y="304" width="3" height="10" fill="#00ff00"/><rect x="341" y="305" width="1" height="8" fill="#000"/><rect x="345" y="293" width="1" height="13" fill="#00ff00"/><rect x="344" y="296" width="3" height="9" fill="#00ff00"/><rect x="345" y="297" width="1" height="7" fill="#000"/><rect x="349" y="294" width="1" height="20" fill="#00ff00"/><rect x="348" y="296" width="3" height="12" fill="#00ff00"/><rect x="349" y="297" width="1" height="10" fill="#fff"/><rect x="353" y="303" width="1" height="19" fill="#00ff00"/><rect x="352" y="307" width="3" height="8" fill="#00ff00"/><rect x="353" y="308" width="1" height="6" fill="#fff"/><rect x="357" y="307" width="1" height="17" fill="#00ff00"/><rect x="356" y="310" width="3" height="5" fill="#00ff00"/><rect x="357" y="311" width="1" height="3" fill="#000"/><rect x="361" y="300" width="1" height="13" fill="#00ff00"/><rect x="360" y="302" width="3" height="9" fill="#00ff00"/><rect x="361" y="303" width="1" height="7" fill="#000"/><rect x="365" y="296" width="1" height="9" fill="#00ff00"/><rect x="364" y="297" width="3" height="7" fill="#00ff00"/><rect x="365" y="298" width="1" height="5" fill="#000"/><rect x="369" y="296" width="1" height="36" fill="#00ff00"/><rect x="368" y="297" width="3" height="27" fill="#00ff00"/><rect x="369" y="298" width="1" height="25" fill="#fff"/><rect x="373" y="322" width="1" height="17" fill="#00ff00"/><rect x="372" y="323" width="3" height="16" fill="#00ff00"/><rect x="373" y="324" width="1" height="14" fill="#000"/><rect x="377" y="320" width="1" height="34" fill="#00ff00"/><rect x="376" y="323" width="3" height="13" fill="#00ff00"/><rect x="377" y="324" width="1" height="11" fill="#fff"/><rect x="381" y="327" width="1" height="23" fill="#00ff00"/><rect x="380" y="335" width="3" height="6" fill="#00ff00"/><rect x="381" y="336" width="1" height="4" fill="#fff"/><rect x="385" y="337" width="1" height="19" fill="#00ff00"/><rect x="384" y="340" width="3" height="3" fill="#00ff00"/><rect x="385" y="341" width="1" height="1" fill="#fff"/><rect x="389" y="340" width="1" height="31" fill="#00ff00"/><rect x="388" y="342" width="3" height="22" fill="#00ff00"/><rect x="389" y="343" width="1" height="20" fill="#fff"/><rect x="393" y="359" width="1" height="16" fill="#00ff00"/><rect x="392" y="363" width="3" height="4" fill="#00ff00"/><rect x="393" y="364" width="1" height="2" fill="#fff"/><rect x="397" y="360" width="1" height="24" fill="#00ff00"/><rect x="396" y="365" width="3" height="9" fill="#00ff00"/><rect x="397" y="366" width="1" height="7" fill="#fff"/><rect x="401" y="354" width="1" height="25" fill="#00ff00"/><rect x="400" y="371" width="3" height="3" fill="#00ff00"/><rect x="401" y="372" width="1" height="1" fill="#fff"/><rect x="405" y="344" width="1" height="31" fill="#00ff00"/><rect x="404" y="355" width="3" height="19" fill="#00ff00"/><rect x="405" y="356" width="1" height="17" fill="#000"/><rect x="409" y="350" width="1" height="12" fill="#00ff00"/><rect x="408" y="355" width="3" height="5" fill="#00ff00"/><rect x="409" y="356" width="1" height="3" fill="#fff"/><rect x="413" y="341" width="1" height="20" fill="#00ff00"/><rect x="412" y="344" width="3" height="16" fill="#00ff00"/><rect x="413" y="345" width="1" height="14" fill="#000"/><rect x="417" y="340" width="1" height="31" fill="#00ff00"/><rect x="416" y="344" width="3" height="7" fill="#00ff00"/><rect x="417" y="345" width="1" height="5" fill="#fff"/><rect x="421" y="319" width="1" height="36" fill="#00ff00"/><rect x="420" y="320" width="3" height="31" fill="#00ff00"/><rect x="421" y="321" width="1" height="29" fill="#000"/><rect x="425" y="301" width="1" height="21" fill="#00ff00"/><rect x="424" y="312" width="3" height="10" fill="#00ff00"/><rect x="425" y="313" width="1" height="8" fill="#000"/><rect x="429" y="294" width="1" height="27" fill="#00ff00"/><rect x="428" y="298" width="3" height="15" fill="#00ff00"/><rect x="429" y="299" width="1" height="13" fill="#000"/><rect x="433" y="280" width="1" height="21" fill="#00ff00"/><rect x="432" y="292" width="3" height="7" fill="#00ff00"/><rect x="433" y="293" width="1" height="5" fill="#000"/><rect x="437" y="283" width="1" height="18" fill="#00ff00"/><rect x="436" y="291" width="3" height="2" fill="#00ff00"/><rect x="441" y="277" width="1" height="21" fill="#00ff00"/><rect x="440" y="284" width="3" height="9" fill="#00ff00"/><rect x="441" y="285" width="1" height="7" fill="#000"/><rect x="445" y="278" width="1" height="28" fill="#00ff00"/><rect x="444" y="284" width="3" height="11" fill="#00ff00"/><rect x="445" y="285" width="1" height="9" fill="#fff"/><rect x="449" y="287" width="1" height="22" fill="#00ff00"/><rect x="448" y="294" width="3" height="10" fill="#00ff00"/><rect x="449" y="295" width="1" height="8" fill="#fff"/><rect x="453" y="295" width="1" height="18" fill="#00ff00"/><rect x="452" y="297" width="3" height="7" fill="#00ff00"/><rect x="453" y="298" width="1" height="5" fill="#000"/><rect x="457" y="295" width="1" height="6" fill="#00ff00"/><rect x="456" y="296" width="3" height="3" fill="#00ff00"/><rect x="457" y="297" width="1" height="1" fill="#fff"/><rect x="461" y="289" width="1" height="30" fill="#00ff00"/><rect x="460" y="298" width="3" height="15" fill="#00ff00"/><rect x="461" y="299" width="1" height="13" fill="#fff"/><rect x="465" y="304" width="1" height="13" fill="#00ff00"/><rect x="464" y="312" width="3" height="2" fill="#00ff00"/><rect x="469" y="306" width="1" height="18" fill="#00ff00"/><rect x="468" y="313" width="3" height="3" fill="#00ff00"/><rect x="469" y="314" width="1" height="1" fill="#fff"/><rect x="473" y="309" width="1" height="14" fill="#00ff00"/><rect x="472" y="314" width="3" height="2" fill="#00ff00"/><rect x="477" y="304" width="1" height="12" fill="#00ff00"/><rect x="476" y="307" width="3" height="9" fill="#00ff00"/><rect x="477" y="308" width="1" height="7" fill="#000"/><rect x="481" y="306" width="1" height="10" fill="#00ff00"/><rect x="480" y="308" width="3" height="7" fill="#00ff00"/><rect x="481" y="309" width="1" height="5" fill="#fff"/><rect x="485" y="304" width="1" height="17" fill="#00ff00"/><rect x="484" y="311" width="3" height="4" fill="#00ff00"/><rect x="485" y="312" width="1" height="2" fill="#000"/><rect x="489" y="291" width="1" height="39" fill="#00ff00"/><rect x="488" y="312" width="3" height="13" fill="#00ff00"/><rect x="489" y="313" width="1" height="11" fill="#fff"/><rect x="493" y="309" width="1" height="55" fill="#00ff00"/><rect x="492" y="324" width="3" height="24" fill="#00ff00"/><rect x="493" y="325" width="1" height="22" fill="#fff"/><rect x="497" y="327" width="1" height="22" fill="#00ff00"/><rect x="496" y="338" width="3" height="10" fill="#00ff00"/><rect x="497" y="339" width="1" height="8" fill="#000"/><rect x="501" y="332" width="1" height="24" fill="#00ff00"/><rect x="500" y="338" width="3" height="8" fill="#00ff00"/><rect x="501" y="339" width="1" height="6" fill="#fff"/><rect x="505" y="338" width="1" height="11" fill="#00ff00"/><rect x="504" y="341" width="3" height="5" fill="#00ff00"/><rect x="505" y="342" width="1" height="3" fill="#000"/><rect x="509" y="336" width="1" height="18" fill="#00ff00"/><rect x="508" y="341" width="3" height="2" fill="#00ff00"/><rect x="513" y="341" width="1" height="18" fill="#00ff00"/><rect x="512" y="342" width="3" height="12" fill="#00ff00"/><rect x="513" y="343" width="1" height="10" fill="#fff"/><rect x="517" y="345" width="1" height="24" fill="#00ff00"/><rect x="516" y="349" width="3" height="8" fill="#00ff00"/><rect x="517" y="350" width="1" height="6" fill="#000"/><rect x="521" y="337" width="1" height="18" fill="#00ff00"/><rect x="520" y="343" width="3" height="7" fill="#00ff00"/><rect x="521" y="344" width="1" height="5" fill="#000"/><rect x="525" y="340" width="1" height="17" fill="#00ff00"/><rect x="524" y="344" width="3" height="6" fill="#00ff00"/><rect x="525" y="345" width="1" height="4" fill="#fff"/><rect x="529" y="344" width="1" height="7" fill="#00ff00"/><rect x="528" y="345" width="3" height="5" fill="#00ff00"/><rect x="529" y="346" width="1" height="3" fill="#000"/><rect x="533" y="343" width="1" height="13" fill="#00ff00"/><rect x="532" y="346" width="3" height="5" fill="#00ff00"/><rect x="533" y="347" width="1" height="3" fill="#fff"/><rect x="537" y="317" width="1" height="34" fill="#00ff00"/><rect x="536" y="322" width="3" height="29" fill="#00ff00"/><rect x="537" y="323" width="1" height="27" fill="#000"/><rect x="541" y="305" width="1" height="25" fill="#00ff00"/><rect x="540" y="314" width="3" height="9" fill="#00ff00"/><rect x="541" y="315" width="1" height="7" fill="#000"/><rect x="545" y="295" width="1" height="22" fill="#00ff00"/><rect x="544" y="296" width="3" height="20" fill="#00ff00"/><rect x="545" y="297" width="1" height="18" fill="#000"/><rect x="549" y="281" width="1" height="21" fill="#00ff00"/><rect x="548" y="285" width="3" height="12" fill="#00ff00"/><rect x="549" y="286" width="1" height="10" fill="#000"/><rect x="553" y="269" width="1" height="25" fill="#00ff00"/><rect x="552" y="275" width="3" height="11" fill="#00ff00"/><rect x="553" y="276" width="1" height="9" fill="#000"/><rect x="557" y="262" width="1" height="20" fill="#00ff00"/><rect x="556" y="275" width="3" height="2" fill="#00ff00"/><rect x="561" y="268" width="1" height="12" fill="#00ff00"/><rect x="560" y="270" width="3" height="8" fill="#00ff00"/><rect x="561" y="271" width="1" height="6" fill="#000"/><rect x="565" y="242" width="1" height="32" fill="#00ff00"/><rect x="564" y="245" width="3" height="27" fill="#00ff00"/><rect x="565" y="246" width="1" height="25" fill="#000"/><rect x="569" y="224" width="1" height="33" fill="#00ff00"/><rect x="568" y="237" width="3" height="9" fill="#00ff00"/><rect x="569" y="238" width="1" height="7" fill="#000"/><rect x="573" y="228" width="1" height="16" fill="#00ff00"/><rect x="572" y="235" width="3" height="3" fill="#00ff00"/><rect x="573" y="236" width="1" height="1" fill="#fff"/><rect x="577" y="228" width="1" height="13" fill="#00ff00"/><rect x="576" y="234" width="3" height="5" fill="#00ff00"/><rect x="577" y="235" width="1" height="3" fill="#fff"/><rect x="581" y="223" width="1" height="20" fill="#00ff00"/><rect x="580" y="231" width="3" height="7" fill="#00ff00"/><rect x="581" y="232" width="1" height="5" fill="#fff"/><rect x="585" y="230" width="1" height="10" fill="#00ff00"/><rect x="584" y="237" width="3" height="2" fill="#00ff00"/><rect x="589" y="237" width="1" height="20" fill="#00ff00"/><rect x="588" y="237" width="3" height="7" fill="#00ff00"/><rect x="589" y="238" width="1" height="5" fill="#fff"/><rect x="593" y="230" width="1" height="24" fill="#00ff00"/><rect x="592" y="234" width="3" height="11" fill="#00ff00"/><rect x="593" y="235" width="1" height="9" fill="#000"/><rect x="597" y="231" width="1" height="21" fill="#00ff00"/><rect x="596" y="235" width="3" height="6" fill="#00ff00"/><rect x="597" y="236" width="1" height="4" fill="#fff"/><rect x="601" y="239" width="1" height="8" fill="#00ff00"/><rect x="600" y="240" width="3" height="3" fill="#00ff00"/><rect x="601" y="241" width="1" height="1" fill="#fff"/><rect x="605" y="234" width="1" height="25" fill="#00ff00"/><rect x="604" y="240" width="3" height="9" fill="#00ff00"/><rect x="605" y="241" width="1" height="7" fill="#fff"/><rect x="609" y="235" width="1" height="14" fill="#00ff00"/><rect x="608" y="246" width="3" height="3" fill="#00ff00"/><rect x="609" y="247" width="1" height="1" fill="#fff"/><rect x="613" y="240" width="1" height="15" fill="#00ff00"/><rect x="612" y="246" width="3" height="6" fill="#00ff00"/><rect x="613" y="247" width="1" height="4" fill="#fff"/><rect x="617" y="247" width="1" height="20" fill="#00ff00"/><rect x="616" y="250" width="3" height="2" fill="#00ff00"/><rect x="621" y="236" width="1" height="17" fill="#00ff00"/><rect x="620" y="242" width="3" height="10" fill="#00ff00"/><rect x="621" y="243" width="1" height="8" fill="#000"/><rect x="625" y="231" width="1" height="13" fill="#00ff00"/><rect x="624" y="237" width="3" height="6" fill="#00ff00"/><rect x="625" y="238" width="1" height="4" fill="#000"/><rect x="629" y="226" width="1" height="14" fill="#00ff00"/><rect x="628" y="227" width="3" height="12" fill="#00ff00"/><rect x="629" y="228" width="1" height="10" fill="#000"/><rect x="633" y="224" width="1" height="9" fill="#00ff00"/><rect x="632" y="227" width="3" height="4" fill="#00ff00"/><rect x="633" y="228" width="1" height="2" fill="#000"/><rect x="637" y="205" width="1" height="28" fill="#00ff00"/><rect x="636" y="206" width="3" height="25" fill="#00ff00"/><rect x="637" y="207" width="1" height="23" fill="#000"/><rect x="641" y="199" width="1" height="23" fill="#00ff00"/><rect x="640" y="206" width="3" height="4" fill="#00ff00"/><rect x="641" y="207" width="1" height="2" fill="#fff"/><rect x="645" y="203" width="1" height="13" fill="#00ff00"/><rect x="644" y="205" width="3" height="5" fill="#00ff00"/><rect x="645" y="206" width="1" height="3" fill="#000"/><rect x="649" y="200" width="1" height="10" fill="#00ff00"/><rect x="648" y="205" width="3" height="3" fill="#00ff00"/><rect x="649" y="206" width="1" height="1" fill="#fff"/><rect x="653" y="204" width="1" height="8" fill="#00ff00"/><rect x="652" y="207" width="3" height="4" fill="#00ff00"/><rect x="653" y="208" width="1" height="2" fill="#fff"/><rect x="657" y="207" width="1" height="12" fill="#00ff00"/><rect x="656" y="208" width="3" height="3" fill="#00ff00"/><rect x="657" y="209" width="1" height="1" fill="#fff"/><rect x="661" y="206" width="1" height="16" fill="#00ff00"/><rect x="660" y="208" width="3" height="4" fill="#00ff00"/><rect x="661" y="209" width="1" height="2" fill="#fff"/><rect x="665" y="207" width="1" height="10" fill="#00ff00"/><rect x="664" y="209" width="3" height="4" fill="#00ff00"/><rect x="665" y="210" width="1" height="2" fill="#000"/><rect x="669" y="193" width="1" height="19" fill="#00ff00"/><rect x="668" y="194" width="3" height="17" fill="#00ff00"/><rect x="669" y="195" width="1" height="15" fill="#000"/><rect x="673" y="182" width="1" height="18" fill="#00ff00"/><rect x="672" y="183" width="3" height="13" fill="#00ff00"/><rect x="673" y="184" width="1" height="11" fill="#000"/><rect x="677" y="171" width="1" height="16" fill="#00ff00"/><rect x="676" y="173" width="3" height="11" fill="#00ff00"/><rect x="677" y="174" width="1" height="9" fill="#000"/><rect x="681" y="154" width="1" height="24" fill="#00ff00"/><rect x="680" y="158" width="3" height="17" fill="#00ff00"/><rect x="681" y="159" width="1" height="15" fill="#000"/><rect x="685" y="143" width="1" height="25" fill="#00ff00"/><rect x="684" y="145" width="3" height="14" fill="#00ff00"/><rect x="685" y="146" width="1" height="12" fill="#000"/><rect x="689" y="141" width="1" height="23" fill="#00ff00"/><rect x="688" y="145" width="3" height="8" fill="#00ff00"/><rect x="689" y="146" width="1" height="6" fill="#fff"/><rect x="693" y="122" width="1" height="55" fill="#00ff00"/><rect x="692" y="135" width="3" height="19" fill="#00ff00"/><rect x="693" y="136" width="1" height="17" fill="#000"/><rect x="697" y="123" width="1" height="17" fill="#00ff00"/><rect x="696" y="133" width="3" height="3" fill="#00ff00"/><rect x="697" y="134" width="1" height="1" fill="#fff"/><rect x="701" y="125" width="1" height="22" fill="#00ff00"/><rect x="700" y="132" width="3" height="11" fill="#00ff00"/><rect x="701" y="133" width="1" height="9" fill="#fff"/><rect x="705" y="136" width="1" height="10" fill="#00ff00"/><rect x="704" y="139" width="3" height="5" fill="#00ff00"/><rect x="705" y="140" width="1" height="3" fill="#000"/><rect x="709" y="129" width="1" height="16" fill="#00ff00"/><rect x="708" y="133" width="3" height="8" fill="#00ff00"/><rect x="709" y="134" width="1" height="6" fill="#000"/><rect x="713" y="131" width="1" height="30" fill="#00ff00"/><rect x="712" y="133" width="3" height="19" fill="#00ff00"/><rect x="713" y="134" width="1" height="17" fill="#fff"/><rect x="717" y="147" width="1" height="24" fill="#00ff00"/><rect x="716" y="151" width="3" height="13" fill="#00ff00"/><rect x="717" y="152" width="1" height="11" fill="#fff"/><rect x="721" y="162" width="1" height="19" fill="#00ff00"/><rect x="720" y="163" width="3" height="13" fill="#00ff00"/><rect x="721" y="164" width="1" height="11" fill="#fff"/><rect x="725" y="172" width="1" height="20" fill="#00ff00"/><rect x="724" y="173" width="3" height="4" fill="#00ff00"/><rect x="725" y="174" width="1" height="2" fill="#000"/><rect x="729" y="172" width="1" height="16" fill="#00ff00"/><rect x="728" y="173" width="3" height="11" fill="#00ff00"/><rect x="729" y="174" width="1" height="9" fill="#000"/><rect x="733" y="147" width="1" height="49" fill="#00ff00"/><rect x="732" y="157" width="3" height="27" fill="#00ff00"/><rect x="733" y="158" width="1" height="25" fill="#000"/><rect x="737" y="128" width="1" height="37" fill="#00ff00"/><rect x="736" y="148" width="3" height="10" fill="#00ff00"/><rect x="737" y="149" width="1" height="8" fill="#000"/><rect x="741" y="123" width="1" height="32" fill="#00ff00"/><rect x="740" y="129" width="3" height="21" fill="#00ff00"/><rect x="741" y="130" width="1" height="19" fill="#000"/><rect x="745" y="116" width="1" height="22" fill="#00ff00"/><rect x="744" y="118" width="3" height="12" fill="#00ff00"/><rect x="745" y="119" width="1" height="10" fill="#000"/><rect x="749" y="105" width="1" height="21" fill="#00ff00"/><rect x="748" y="106" width="3" height="14" fill="#00ff00"/><rect x="749" y="107" width="1" height="12" fill="#000"/><rect x="753" y="104" width="1" height="18" fill="#00ff00"/><rect x="752" y="106" width="3" height="14" fill="#00ff00"/><rect x="753" y="107" width="1" height="12" fill="#fff"/><rect x="757" y="110" width="1" height="24" fill="#00ff00"/><rect x="756" y="119" width="3" height="5" fill="#00ff00"/><rect x="757" y="120" width="1" height="3" fill="#fff"/><rect x="761" y="122" width="1" height="27" fill="#00ff00"/><rect x="760" y="123" width="3" height="26" fill="#00ff00"/><rect x="761" y="124" width="1" height="24" fill="#fff"/><rect x="765" y="126" width="1" height="23" fill="#00ff00"/><rect x="764" y="140" width="3" height="9" fill="#00ff00"/><rect x="765" y="141" width="1" height="7" fill="#000"/><rect x="769" y="130" width="1" height="17" fill="#00ff00"/><rect x="768" y="132" width="3" height="9" fill="#00ff00"/><rect x="769" y="133" width="1" height="7" fill="#000"/><rect x="773" y="131" width="1" height="15" fill="#00ff00"/><rect x="772" y="132" width="3" height="12" fill="#00ff00"/><rect x="773" y="133" width="1" height="10" fill="#fff"/><rect x="777" y="130" width="1" height="16" fill="#00ff00"/><rect x="776" y="132" width="3" height="12" fill="#00ff00"/><rect x="777" y="133" width="1" height="10" fill="#000"/><rect x="781" y="110" width="1" height="27" fill="#00ff00"/><rect x="780" y="115" width="3" height="18" fill="#00ff00"/><rect x="781" y="116" width="1" height="16" fill="#000"/><rect x="785" y="109" width="1" height="43" fill="#00ff00"/><rect x="784" y="115" width="3" height="37" fill="#00ff00"/><rect x="785" y="116" width="1" height="35" fill="#fff"/><rect x="789" y="142" width="1" height="44" fill="#00ff00"/><rect x="788" y="151" width="3" height="14" fill="#00ff00"/><rect x="789" y="152" width="1" height="12" fill="#fff"/><rect x="793" y="159" width="1" height="11" fill="#00ff00"/><rect x="792" y="161" width="3" height="4" fill="#00ff00"/><rect x="793" y="162" width="1" height="2" fill="#000"/><rect x="797" y="157" width="1" height="13" fill="#00ff00"/><rect x="796" y="160" width="3" height="2" fill="#00ff00"/><rect x="801" y="157" width="1" height="18" fill="#00ff00"/><rect x="800" y="161" width="3" height="11" fill="#00ff00"/><rect x="801" y="162" width="1" height="9" fill="#fff"/><rect x="805" y="167" width="1" height="41" fill="#00ff00"/><rect x="804" y="171" width="3" height="17" fill="#00ff00"/><rect x="805" y="172" width="1" height="15" fill="#fff"/><rect x="809" y="187" width="1" height="25" fill="#00ff00"/><rect x="808" y="188" width="3" height="10" fill="#00ff00"/><rect x="809" y="189" width="1" height="8" fill="#fff"/><rect x="813" y="184" width="1" height="22" fill="#00ff00"/><rect x="812" y="197" width="3" height="4" fill="#00ff00"/><rect x="813" y="198" width="1" height="2" fill="#fff"/><rect x="817" y="192" width="1" height="13" fill="#00ff00"/><rect x="816" y="199" width="3" height="5" fill="#00ff00"/><rect x="817" y="200" width="1" height="3" fill="#000"/><rect x="821" y="194" width="1" height="14" fill="#00ff00"/><rect x="820" y="196" width="3" height="7" fill="#00ff00"/><rect x="821" y="197" width="1" height="5" fill="#000"/><rect x="825" y="195" width="1" height="12" fill="#00ff00"/><rect x="824" y="198" width="3" height="5" fill="#00ff00"/><rect x="825" y="199" width="1" height="3" fill="#000"/><rect x="829" y="172" width="1" height="33" fill="#00ff00"/><rect x="828" y="174" width="3" height="25" fill="#00ff00"/><rect x="829" y="175" width="1" height="23" fill="#000"/><rect x="833" y="161" width="1" height="20" fill="#00ff00"/><rect x="832" y="173" width="3" height="3" fill="#00ff00"/><rect x="833" y="174" width="1" height="1" fill="#fff"/><rect x="837" y="160" width="1" height="24" fill="#00ff00"/><rect x="836" y="161" width="3" height="14" fill="#00ff00"/><rect x="837" y="162" width="1" height="12" fill="#000"/><rect x="841" y="130" width="1" height="42" fill="#00ff00"/><rect x="840" y="136" width="3" height="26" fill="#00ff00"/><rect x="841" y="137" width="1" height="24" fill="#000"/><rect x="845" y="135" width="1" height="11" fill="#00ff00"/><rect x="844" y="136" width="3" height="5" fill="#00ff00"/><rect x="845" y="137" width="1" height="3" fill="#fff"/><rect x="849" y="137" width="1" height="21" fill="#00ff00"/><rect x="848" y="139" width="3" height="17" fill="#00ff00"/><rect x="849" y="140" width="1" height="15" fill="#fff"/><rect x="853" y="140" width="1" height="18" fill="#00ff00"/><rect x="852" y="150" width="3" height="6" fill="#00ff00"/><rect x="853" y="151" width="1" height="4" fill="#000"/><rect x="857" y="123" width="1" height="48" fill="#00ff00"/><rect x="856" y="149" width="3" height="2" fill="#00ff00"/><rect x="861" y="141" width="1" height="32" fill="#00ff00"/><rect x="860" y="149" width="3" height="10" fill="#00ff00"/><rect x="861" y="150" width="1" height="8" fill="#fff"/><rect x="865" y="148" width="1" height="15" fill="#00ff00"/><rect x="864" y="154" width="3" height="5" fill="#00ff00"/><rect x="865" y="155" width="1" height="3" fill="#000"/><rect x="869" y="151" width="1" height="15" fill="#00ff00"/><rect x="868" y="154" width="3" height="6" fill="#00ff00"/><rect x="869" y="155" width="1" height="4" fill="#fff"/><rect x="873" y="157" width="1" height="22" fill="#00ff00"/><rect x="872" y="158" width="3" height="10" fill="#00ff00"/><rect x="873" y="159" width="1" height="8" fill="#fff"/><rect x="877" y="148" width="1" height="27" fill="#00ff00"/><rect x="876" y="155" width="3" height="13" fill="#00ff00"/><rect x="877" y="156" width="1" height="11" fill="#000"/><rect x="881" y="132" width="1" height="26" fill="#00ff00"/><rect x="880" y="147" width="3" height="9" fill="#00ff00"/><rect x="881" y="148" width="1" height="7" fill="#000"/><rect x="885" y="141" width="1" height="23" fill="#00ff00"/><rect x="884" y="147" width="3" height="6" fill="#00ff00"/><rect x="885" y="148" width="1" height="4" fill="#fff"/><rect x="889" y="151" width="1" height="8" fill="#00ff00"/><rect x="888" y="153" width="3" height="4" fill="#00ff00"/><rect x="889" y="154" width="1" height="2" fill="#fff"/><rect x="893" y="148" width="1" height="19" fill="#00ff00"/><rect x="892" y="151" width="3" height="6" fill="#00ff00"/><rect x="893" y="152" width="1" height="4" fill="#000"/><rect x="897" y="148" width="1" height="13" fill="#00ff00"/><rect x="896" y="151" width="3" height="6" fill="#00ff00"/><rect x="897" y="152" width="1" height="4" fill="#fff"/><rect x="901" y="148" width="1" height="25" fill="#00ff00"/><rect x="900" y="156" width="3" height="16" fill="#00ff00"/><rect x="901" y="157" width="1" height="14" fill="#fff"/><rect x="905" y="170" width="1" height="28" fill="#00ff00"/><rect x="904" y="171" width="3" height="19" fill="#00ff00"/><rect x="905" y="172" width="1" height="17" fill="#fff"/><rect x="909" y="185" width="1" height="15" fill="#00ff00"/><rect x="908" y="189" width="3" height="5" fill="#00ff00"/><rect x="909" y="190" width="1" height="3" fill="#fff"/><rect x="913" y="189" width="1" height="13" fill="#00ff00"/><rect x="912" y="192" width="3" height="3" fill="#00ff00"/><rect x="913" y="193" width="1" height="1" fill="#fff"/><rect x="917" y="186" width="1" height="20" fill="#00ff00"/><rect x="916" y="194" width="3" height="7" fill="#00ff00"/><rect x="917" y="195" width="1" height="5" fill="#fff"/><rect x="921" y="190" width="1" height="28" fill="#00ff00"/><rect x="920" y="200" width="3" height="5" fill="#00ff00"/><rect x="921" y="201" width="1" height="3" fill="#fff"/><rect x="925" y="193" width="1" height="31" fill="#00ff00"/><rect x="924" y="205" width="3" height="15" fill="#00ff00"/><rect x="925" y="206" width="1" height="13" fill="#fff"/><rect x="929" y="173" width="1" height="49" fill="#00ff00"/><rect x="928" y="176" width="3" height="44" fill="#00ff00"/><rect x="929" y="177" width="1" height="42" fill="#000"/><rect x="933" y="164" width="1" height="14" fill="#00ff00"/><rect x="932" y="174" width="3" height="4" fill="#00ff00"/><rect x="933" y="175" width="1" height="2" fill="#000"/><rect x="937" y="166" width="1" height="16" fill="#00ff00"/><rect x="936" y="174" width="3" height="2" fill="#00ff00"/><rect x="941" y="155" width="1" height="19" fill="#00ff00"/><rect x="940" y="160" width="3" height="13" fill="#00ff00"/><rect x="941" y="161" width="1" height="11" fill="#000"/><rect x="945" y="155" width="1" height="12" fill="#00ff00"/><rect x="944" y="161" width="3" height="3" fill="#00ff00"/><rect x="945" y="162" width="1" height="1" fill="#fff"/><rect x="949" y="149" width="1" height="21" fill="#00ff00"/><rect x="948" y="158" width="3" height="6" fill="#00ff00"/><rect x="949" y="159" width="1" height="4" fill="#000"/><rect x="953" y="154" width="1" height="15" fill="#00ff00"/><rect x="952" y="159" width="3" height="3" fill="#00ff00"/><rect x="953" y="160" width="1" height="1" fill="#000"/><rect x="957" y="158" width="1" height="11" fill="#00ff00"/><rect x="956" y="160" width="3" height="2" fill="#00ff00"/><rect x="961" y="158" width="1" height="5" fill="#00ff00"/><rect x="960" y="160" width="3" height="2" fill="#00ff00"/><rect x="965" y="160" width="1" height="16" fill="#00ff00"/><rect x="964" y="161" width="3" height="6" fill="#00ff00"/><rect x="965" y="162" width="1" height="4" fill="#fff"/><rect x="969" y="162" width="1" height="12" fill="#00ff00"/><rect x="968" y="165" width="3" height="8" fill="#00ff00"/><rect x="969" y="166" width="1" height="6" fill="#fff"/><rect x="973" y="166" width="1" height="17" fill="#00ff00"/><rect x="972" y="172" width="3" height="5" fill="#00ff00"/><rect x="973" y="173" width="1" height="3" fill="#fff"/><rect x="977" y="164" width="1" height="19" fill="#00ff00"/><rect x="976" y="176" width="3" height="2" fill="#00ff00"/><rect x="981" y="163" width="1" height="16" fill="#00ff00"/><rect x="980" y="166" width="3" height="12" fill="#00ff00"/><rect x="981" y="167" width="1" height="10" fill="#000"/><rect x="985" y="162" width="1" height="12" fill="#00ff00"/><rect x="984" y="165" width="3" height="3" fill="#00ff00"/><rect x="985" y="166" width="1" height="1" fill="#fff"/><rect x="989" y="149" width="1" height="20" fill="#00ff00"/><rect x="988" y="154" width="3" height="14" fill="#00ff00"/><rect x="989" y="155" width="1" height="12" fill="#000"/><rect x="993" y="153" width="1" height="23" fill="#00ff00"/><rect x="992" y="153" width="3" height="19" fill="#00ff00"/><rect x="993" y="154" width="1" height="17" fill="#fff"/><rect x="997" y="160" width="1" height="14" fill="#00ff00"/><rect x="996" y="163" width="3" height="8" fill="#00ff00"/><rect x="997" y="164" width="1" height="6" fill="#000"/><rect x="1001" y="160" width="1" height="16" fill="#00ff00"/><rect x="1000" y="162" width="3" height="2" fill="#00ff00"/><rect x="1005" y="157" width="1" height="22" fill="#00ff00"/><rect x="1004" y="162" width="3" height="12" fill="#00ff00"/><rect x="1005" y="163" width="1" height="10" fill="#fff"/><rect x="1009" y="165" width="1" height="29" fill="#00ff00"/><rect x="1008" y="174" width="3" height="18" fill="#00ff00"/><rect x="1009" y="175" width="1" height="16" fill="#fff"/><rect x="1013" y="178" width="1" height="15" fill="#00ff00"/><rect x="1012" y="187" width="3" height="5" fill="#00ff00"/><rect x="1013" y="188" width="1" height="3" fill="#000"/><rect x="1017" y="187" width="1" height="19" fill="#00ff00"/><rect x="1016" y="187" width="3" height="17" fill="#00ff00"/><rect x="1017" y="188" width="1" height="15" fill="#fff"/><rect x="1021" y="193" width="1" height="30" fill="#00ff00"/><rect x="1020" y="203" width="3" height="14" fill="#00ff00"/><rect x="1021" y="204" width="1" height="12" fill="#fff"/><rect x="1025" y="215" width="1" height="26" fill="#00ff00"/><rect x="1024" y="216" width="3" height="9" fill="#00ff00"/><rect x="1025" y="217" width="1" height="7" fill="#fff"/><rect x="1029" y="215" width="1" height="20" fill="#00ff00"/><rect x="1028" y="226" width="3" height="5" fill="#00ff00"/><rect x="1029" y="227" width="1" height="3" fill="#fff"/><rect x="1033" y="222" width="1" height="15" fill="#00ff00"/><rect x="1032" y="226" width="3" height="6" fill="#00ff00"/><rect x="1033" y="227" width="1" height="4" fill="#000"/><rect x="1037" y="216" width="1" height="19" fill="#00ff00"/><rect x="1036" y="226" width="3" height="2" fill="#00ff00"/><rect x="1041" y="209" width="1" height="23" fill="#00ff00"/><rect x="1040" y="216" width="3" height="11" fill="#00ff00"/><rect x="1041" y="217" width="1" height="9" fill="#000"/><rect x="1045" y="201" width="1" height="20" fill="#00ff00"/><rect x="1044" y="212" width="3" height="5" fill="#00ff00"/><rect x="1045" y="213" width="1" height="3" fill="#000"/><rect x="1049" y="210" width="1" height="21" fill="#00ff00"/><rect x="1048" y="212" width="3" height="9" fill="#00ff00"/><rect x="1049" y="213" width="1" height="7" fill="#fff"/><rect x="1053" y="214" width="1" height="19" fill="#00ff00"/><rect x="1052" y="215" width="3" height="6" fill="#00ff00"/><rect x="1053" y="216" width="1" height="4" fill="#000"/><rect x="1057" y="214" width="1" height="6" fill="#00ff00"/><rect x="1056" y="215" width="3" height="2" fill="#00ff00"/><rect x="126" y="82" width="2" height="1" fill="#0000ff"/><rect x="128" y="83" width="5" height="1" fill="#0000ff"/><rect x="133" y="84" width="6" height="1" fill="#0000ff"/><rect x="139" y="85" width="5" height="1" fill="#0000ff"/><rect x="144" y="86" width="6" height="1" fill="#0000ff"/><rect x="150" y="87" width="5" height="1" fill="#0000ff"/><rect x="155" y="88" width="6" height="1" fill="#0000ff"/><rect x="161" y="89" width="5" height="1" fill="#0000ff"/><rect x="166" y="90" width="6" height="1" fill="#0000ff"/><rect x="172" y="91" width="5" height="1" fill="#0000ff"/><rect x="177" y="92" width="6" height="1" fill="#0000ff"/><rect x="183" y="93" width="6" height="1" fill="#0000ff"/><rect x="189" y="94" width="5" height="1" fill="#0000ff"/><rect x="194" y="95" width="6" height="1" fill="#0000ff"/><rect x="200" y="96" width="5" height="1" fill="#0000ff"/><rect x="205" y="97" width="6" height="1" fill="#0000ff"/><rect x="211" y="98" width="5" height="1" fill="#0000ff"/><rect x="216" y="99" width="6" height="1" fill="#0000ff"/><rect x="222" y="100" width="5" height="1" fill="#0000ff"/><rect x="227" y="101" width="6" height="1" fill="#0000ff"/><rect x="233" y="102" width="6" height="1" fill="#0000ff"/><rect x="239" y="103" width="5" height="1" fill="#0000ff"/><rect x="244" y="104" width="6" height="1" fill="#0000ff"/><rect x="250" y="105" width="5" height="1" fill="#0000ff"/><rect x="255" y="106" width="6" height="1" fill="#0000ff"/><rect x="261" y="107" width="5" height="1" fill="#0000ff"/><rect x="266" y="108" width="6" height="1" fill="#0000ff"/><rect x="272" y="109" width="5" height="1" fill="#0000ff"/><rect x="277" y="110" width="6" height="1" fill="#0000ff"/><rect x="283" y="111" width="5" height="1" fill="#0000ff"/><rect x="288" y="112" width="6" height="1" fill="#0000ff"/><rect x="294" y="113" width="6" height="1" fill="#0000ff"/><rect x="300" y="114" width="5" height="1" fill="#0000ff"/><rect x="305" y="115" width="6" height="1" fill="#0000ff"/><rect x="311" y="116" width="5" height="1" fill="#0000ff"/><rect x="316" y="117" width="6" height="1" fill="#0000ff"/><rect x="322" y="118" width="5" height="1" fill="#0000ff"/><rect x="327" y="119" width="6" height="1" fill="#0000ff"/><rect x="333" y="120" width="5" height="1" fill="#0000ff"/><rect x="338" y="121" width="6" height="1" fill="#0000ff"/><rect x="344" y="122" width="6" height="1" fill="#0000ff"/><rect x="350" y="123" width="5" height="1" fill="#0000ff"/><rect x="355" y="124" width="6" height="1" fill="#0000ff"/><rect x="361" y="125" width="5" height="1" fill="#0000ff"/><rect x="366" y="126" width="6" height="1" fill="#0000ff"/><rect x="372" y="127" width="5" height="1" fill="#0000ff"/><rect x="377" y="128" width="6" height="1" fill="#0000ff"/><rect x="383" y="129" width="5" height="1" fill="#0000ff"/><rect x="388" y="130" width="6" height="1" fill="#0000ff"/><rect x="394" y="131" width="5" height="1" fill="#0000ff"/><rect x="399" y="132" width="6" height="1" fill="#0000ff"/><rect x="405" y="133" width="6" height="1" fill="#0000ff"/><rect x="411" y="134" width="5" height="1" fill="#0000ff"/><rect x="416" y="135" width="6" height="1" fill="#0000ff"/><rect x="422" y="136" width="5" height="1" fill="#0000ff"/><rect x="427" y="137" width="6" height="1" fill="#0000ff"/><rect x="433" y="138" width="5" height="1" fill="#0000ff"/><rect x="438" y="139" width="6" height="1" fill="#0000ff"/><rect x="444" y="140" width="5" height="1" fill="#0000ff"/><rect x="449" y="141" width="6" height="1" fill="#0000ff"/><rect x="455" y="142" width="5" height="1" fill="#0000ff"/><rect x="460" y="143" width="6" height="1" fill="#0000ff"/><rect x="466" y="144" width="6" height="1" fill="#0000ff"/><rect x="472" y="145" width="5" height="1" fill="#0000ff"/><rect x="477" y="146" width="6" height="1" fill="#0000ff"/><rect x="483" y="147" width="5" height="1" fill="#0000ff"/><rect x="488" y="148" width="6" height="1" fill="#0000ff"/><rect x="494" y="149" width="5" height="1" fill="#0000ff"/><rect x="499" y="150" width="6" height="1" fill="#0000ff"/><rect x="505" y="151" width="5" height="1" fill="#0000ff"/><rect x="510" y="152" width="6" height="1" fill="#0000ff"/><rect x="516" y="153" width="6" height="1" fill="#0000ff"/><rect x="522" y="154" width="5" height="1" fill="#0000ff"/><rect x="527" y="155" width="6" height="1" fill="#0000ff"/><rect x="533" y="156" width="5" height="1" fill="#0000ff"/><rect x="538" y="157" width="6" height="1" fill="#0000ff"/><rect x="544" y="158" width="5" height="1" fill="#0000ff"/><rect x="549" y="159" width="6" height="1" fill="#0000ff"/><rect x="555" y="160" width="5" height="1" fill="#0000ff"/><rect x="560" y="161" width="6" height="1" fill="#0000ff"/><rect x="566" y="162" width="5" height="1" fill="#0000ff"/><rect x="571" y="163" width="6" height="1" fill="#0000ff"/><rect x="577" y="164" width="6" height="1" fill="#0000ff"/><rect x="583" y="165" width="5" height="1" fill="#0000ff"/><rect x="588" y="166" width="6" height="1" fill="#0000ff"/><rect x="594" y="167" width="5" height="1" fill="#0000ff"/><rect x="599" y="168" width="6" height="1" fill="#0000ff"/><rect x="605" y="169" width="5" height="1" fill="#0000ff"/><rect x="610" y="170" width="6" height="1" fill="#0000ff"/><rect x="616" y="171" width="5" height="1" fill="#0000ff"/><rect x="621" y="172" width="6" height="1" fill="#0000ff"/><rect x="627" y="173" width="6" height="1" fill="#0000ff"/><rect x="633" y="174" width="5" height="1" fill="#0000ff"/><rect x="638" y="175" width="6" height="1" fill="#0000ff"/><rect x="644" y="176" width="5" height="1" fill="#0000ff"/><rect x="649" y="177" width="6" height="1" fill="#0000ff"/><rect x="655" y="178" width="5" height="1" fill="#0000ff"/><rect x="660" y="179" width="6" height="1" fill="#0000ff"/><rect x="666" y="180" width="5" height="1" fill="#0000ff"/><rect x="671" y="181" width="6" height="1" fill="#0000ff"/><rect x="677" y="182" width="5" height="1" fill="#0000ff"/><rect x="682" y="183" width="6" height="1" fill="#0000ff"/><rect x="688" y="184" width="6" height="1" fill="#0000ff"/><rect x="694" y="185" width="5" height="1" fill="#0000ff"/><rect x="699" y="186" width="6" height="1" fill="#0000ff"/><rect x="705" y="187" width="5" height="1" fill="#0000ff"/><rect x="710" y="188" width="6" height="1" fill="#0000ff"/><rect x="716" y="189" width="5" height="1" fill="#0000ff"/><rect x="721" y="190" width="6" height="1" fill="#0000ff"/><rect x="727" y="191" width="5" height="1" fill="#0000ff"/><rect x="732" y="192" width="6" height="1" fill="#0000ff"/><rect x="738" y="193" width="6" height="1" fill="#0000ff"/><rect x="744" y="194" width="5" height="1" fill="#0000ff"/><rect x="749" y="195" width="6" height="1" fill="#0000ff"/><rect x="755" y="196" width="5" height="1" fill="#0000ff"/><rect x="760" y="197" width="6" height="1" fill="#0000ff"/><rect x="766" y="198" width="5" height="1" fill="#0000ff"/><rect x="771" y="199" width="6" height="1" fill="#0000ff"/><rect x="777" y="200" width="5" height="1" fill="#0000ff"/><rect x="782" y="201" width="6" height="1" fill="#0000ff"/><rect x="788" y="202" width="5" height="1" fill="#0000ff"/><rect x="793" y="203" width="6" height="1" fill="#0000ff"/><rect x="799" y="204" width="6" height="1" fill="#0000ff"/><rect x="805" y="205" width="5" height="1" fill="#0000ff"/><rect x="810" y="206" width="6" height="1" fill="#0000ff"/><rect x="816" y="207" width="5" height="1" fill="#0000ff"/><rect x="821" y="208" width="6" height="1" fill="#0000ff"/><rect x="827" y="209" width="5" height="1" fill="#0000ff"/><rect x="832" y="210" width="6" height="1" fill="#0000ff"/><rect x="838" y="211" width="5" height="1" fill="#0000ff"/><rect x="843" y="212" width="6" height="1" fill="#0000ff"/><rect x="849" y="213" width="6" height="1" fill="#0000ff"/><rect x="855" y="214" width="5" height="1" fill="#0000ff"/><rect x="860" y="215" width="6" height="1" fill="#0000ff"/><rect x="866" y="216" width="5" height="1" fill="#0000ff"/><rect x="871" y="217" width="6" height="1" fill="#0000ff"/><rect x="877" y="218" width="5" height="1" fill="#0000ff"/><rect x="882" y="219" width="6" height="1" fill="#0000ff"/><rect x="888" y="220" width="5" height="1" fill="#0000ff"/><rect x="893" y="221" width="6" height="1" fill="#0000ff"/><rect x="899" y="222" width="5" height="1" fill="#0000ff"/><rect x="904" y="223" width="6" height="1" fill="#0000ff"/><rect x="910" y="224" width="6" height="1" fill="#0000ff"/><rect x="916" y="225" width="5" height="1" fill="#0000ff"/><rect x="921" y="226" width="6" height="1" fill="#0000ff"/><rect x="927" y="227" width="5" height="1" fill="#0000ff"/><rect x="932" y="228" width="6" height="1" fill="#0000ff"/><rect x="938" y="229" width="5" height="1" fill="#0000ff"/><rect x="943" y="230" width="6" height="1" fill="#0000ff"/><rect x="949" y="231" width="5" height="1" fill="#0000ff"/><rect x="954" y="232" width="6" height="1" fill="#0000ff"/><rect x="960" y="233" width="5" height="1" fill="#0000ff"/><rect x="965" y="234" width="6" height="1" fill="#0000ff"/><rect x="971" y="235" width="6" height="1" fill="#0000ff"/><rect x="977" y="236" width="5" height="1" fill="#0000ff"/><rect x="982" y="237" width="6" height="1" fill="#0000ff"/><rect x="988" y="238" width="5" height="1" fill="#0000ff"/><rect x="993" y="239" width="6" height="1" fill="#0000ff"/><rect x="999" y="240" width="5" height="1" fill="#0000ff"/><rect x="1004" y="241" width="6" height="1" fill="#0000ff"/><rect x="1010" y="242" width="5" height="1" fill="#0000ff"/><rect x="1015" y="243" width="6" height="1" fill="#0000ff"/><rect x="1021" y="244" width="6" height="1" fill="#0000ff"/><rect x="1027" y="245" width="5" height="1" fill="#0000ff"/><rect x="1032" y="246" width="6" height="1" fill="#0000ff"/><rect x="1038" y="247" width="5" height="1" fill="#0000ff"/><rect x="1043" y="248" width="6" height="1" fill="#0000ff"/><rect x="1049" y="249" width="5" height="1" fill="#0000ff"/><rect x="1054" y="250" width="6" height="1" fill="#0000ff"/><rect x="1060" y="251" width="5" height="1" fill="#0000ff"/><rect x="1065" y="252" width="6" height="1" fill="#0000ff"/><rect x="1071" y="253" width="5" height="1" fill="#0000ff"/><rect x="1076" y="254" width="6" height="1" fill="#0000ff"/><rect x="1082" y="255" width="6" height="1" fill="#0000ff"/><rect x="1088" y="256" width="5" height="1" fill="#0000ff"/><rect x="1093" y="257" width="6" height="1" fill="#0000ff"/><rect x="1099" y="258" width="5" height="1" fill="#0000ff"/><rect x="1104" y="259" width="6" height="1" fill="#0000ff"/><rect x="1110" y="260" width="5" height="1" fill="#0000ff"/><rect x="1115" y="261" width="6" height="1" fill="#0000ff"/><rect x="1121" y="262" width="5" height="1" fill="#0000ff"/><rect x="1126" y="263" width="6" height="1" fill="#0000ff"/><rect x="1132" y="264" width="6" height="1" fill="#0000ff"/><rect x="1138" y="265" width="5" height="1" fill="#0000ff"/><rect x="1143" y="266" width="6" height="1" fill="#0000ff"/><rect x="1149" y="267" width="5" height="1" fill="#0000ff"/><rect x="1154" y="268" width="6" height="1" fill="#0000ff"/><rect x="1160" y="269" width="5" height="1" fill="#0000ff"/><rect x="1165" y="270" width="6" height="1" fill="#0000ff"/><rect x="1171" y="271" width="5" height="1" fill="#0000ff"/><rect x="1176" y="272" width="6" height="1" fill="#0000ff"/><rect x="1182" y="273" width="5" height="1" fill="#0000ff"/><rect x="1187" y="274" width="6" height="1" fill="#0000ff"/><rect x="1193" y="275" width="6" height="1" fill="#0000ff"/><rect x="1199" y="276" width="5" height="1" fill="#0000ff"/><rect x="1204" y="277" width="6" height="1" fill="#0000ff"/><rect x="1210" y="278" width="5" height="1" fill="#0000ff"/><rect x="1215" y="279" width="6" height="1" fill="#0000ff"/><rect x="1221" y="280" width="5" height="1" fill="#0000ff"/><rect x="1226" y="281" width="6" height="1" fill="#0000ff"/><rect x="1232" y="282" width="5" height="1" fill="#0000ff"/><rect x="1237" y="283" width="6" height="1" fill="#0000ff"/><rect x="1243" y="284" width="6" height="1" fill="#0000ff"/><rect x="1249" y="285" width="5" height="1" fill="#0000ff"/><rect x="1254" y="286" width="6" height="1" fill="#0000ff"/><rect x="1260" y="287" width="5" height="1" fill="#0000ff"/><rect x="1265" y="288" width="6" height="1" fill="#0000ff"/><rect x="1271" y="289" width="5" height="1" fill="#0000ff"/><rect x="1276" y="290" width="6" height="1" fill="#0000ff"/><rect x="1282" y="291" width="5" height="1" fill="#0000ff"/><rect x="1287" y="292" width="6" height="1" fill="#0000ff"/><rect x="1293" y="293" width="5" height="1" fill="#0000ff"/><rect x="1298" y="294" width="6" height="1" fill="#0000ff"/><rect x="1304" y="295" width="6" height="1" fill="#0000ff"/><rect x="1310" y="296" width="5" height="1" fill="#0000ff"/><rect x="1315" y="297" width="6" height="1" fill="#0000ff"/><rect x="1321" y="298" width="5" height="1" fill="#0000ff"/><rect x="1326" y="299" width="3" height="1" fill="#0000ff"/><rect x="693" y="93" width="3" height="1" fill="#0000ff"/><rect x="696" y="94" width="6" height="1" fill="#0000ff"/><rect x="702" y="95" width="5" height="1" fill="#0000ff"/><rect x="707" y="96" width="6" height="1" fill="#0000ff"/><rect x="713" y="97" width="6" height="1" fill="#0000ff"/><rect x="719" y="98" width="5" height="1" fill="#0000ff"/><rect x="724" y="99" width="6" height="1" fill="#0000ff"/><rect x="730" y="100" width="5" height="1" fill="#0000ff"/><rect x="735" y="101" width="6" height="1" fill="#0000ff"/><rect x="741" y="102" width="5" height="1" fill="#0000ff"/><rect x="746" y="103" width="6" height="1" fill="#0000ff"/><rect x="752" y="104" width="6" height="1" fill="#0000ff"/><rect x="758" y="105" width="5" height="1" fill="#0000ff"/><rect x="763" y="106" width="6" height="1" fill="#0000ff"/><rect x="769" y="107" width="5" height="1" fill="#0000ff"/><rect x="774" y="108" width="6" height="1" fill="#0000ff"/><rect x="780" y="109" width="6" height="1" fill="#0000ff"/><rect x="786" y="110" width="5" height="1" fill="#0000ff"/><rect x="791" y="111" width="6" height="1" fill="#0000ff"/><rect x="797" y="112" width="5" height="1" fill="#0000ff"/><rect x="802" y="113" width="6" height="1" fill="#0000ff"/><rect x="808" y="114" width="5" height="1" fill="#0000ff"/><rect x="813" y="115" width="6" height="1" fill="#0000ff"/><rect x="819" y="116" width="6" height="1" fill="#0000ff"/><rect x="825" y="117" width="5" height="1" fill="#0000ff"/><rect x="830" y="118" width="6" height="1" fill="#0000ff"/><rect x="836" y="119" width="5" height="1" fill="#0000ff"/><rect x="841" y="120" width="6" height="1" fill="#0000ff"/><rect x="847" y="121" width="5" height="1" fill="#0000ff"/><rect x="852" y="122" width="6" height="1" fill="#0000ff"/><rect x="858" y="123" width="6" height="1" fill="#0000ff"/><rect x="864" y="124" width="5" height="1" fill="#0000ff"/><rect x="869" y="125" width="6" height="1" fill="#0000ff"/><rect x="875" y="126" width="5" height="1" fill="#0000ff"/><rect x="880" y="127" width="6" height="1" fill="#0000ff"/><rect x="886" y="128" width="6" height="1" fill="#0000ff"/><rect x="892" y="129" width="5" height="1" fill="#0000ff"/><rect x="897" y="130" width="6" height="1" fill="#0000ff"/><rect x="903" y="131" width="5" height="1" fill="#0000ff"/><rect x="908" y="132" width="6" height="1" fill="#0000ff"/><rect x="914" y="133" width="5" height="1" fill="#0000ff"/><rect x="919" y="134" width="6" height="1" fill="#0000ff"/><rect x="925" y="135" width="6" height="1" fill="#0000ff"/><rect x="931" y="136" width="5" height="1" fill="#0000ff"/><rect x="936" y="137" width="6" height="1" fill="#0000ff"/><rect x="942" y="138" width="5" height="1" fill="#0000ff"/><rect x="947" y="139" width="6" height="1" fill="#0000ff"/><rect x="953" y="140" width="5" height="1" fill="#0000ff"/><rect x="958" y="141" width="6" height="1" fill="#0000ff"/><rect x="964" y="142" width="6" height="1" fill="#0000ff"/><rect x="970" y="143" width="5" height="1" fill="#0000ff"/><rect x="975" y="144" width="6" height="1" fill="#0000ff"/><rect x="981" y="145" width="5" height="1" fill="#0000ff"/><rect x="986" y="146" width="6" height="1" fill="#0000ff"/><rect x="992" y="147" width="6" height="1" fill="#0000ff"/><rect x="998" y="148" width="5" height="1" fill="#0000ff"/><rect x="1003" y="149" width="6" height="1" fill="#0000ff"/><rect x="1009" y="150" width="5" height="1" fill="#0000ff"/><rect x="1014" y="151" width="6" height="1" fill="#0000ff"/><rect x="1020" y="152" width="5" height="1" fill="#0000ff"/><rect x="1025" y="153" width="6" height="1" fill="#0000ff"/><rect x="1031" y="154" width="6" height="1" fill="#0000ff"/><rect x="1037" y="155" width="5" height="1" fill="#0000ff"/><rect x="1042" y="156" width="6" height="1" fill="#0000ff"/><rect x="1048" y="157" width="5" height="1" fill="#0000ff"/><rect x="1053" y="158" width="6" height="1" fill="#0000ff"/><rect x="1059" y="159" width="5" height="1" fill="#0000ff"/><rect x="1064" y="160" width="6" height="1" fill="#0000ff"/><rect x="1070" y="161" width="6" height="1" fill="#0000ff"/><rect x="1076" y="162" width="5" height="1" fill="#0000ff"/><rect x="1081" y="163" width="6" height="1" fill="#0000ff"/><rect x="1087" y="164" width="5" height="1" fill="#0000ff"/><rect x="1092" y="165" width="6" height="1" fill="#0000ff"/><rect x="1098" y="166" width="6" height="1" fill="#0000ff"/><rect x="1104" y="167" width="5" height="1" fill="#0000ff"/><rect x="1109" y="168" width="6" height="1" fill="#0000ff"/><rect x="1115" y="169" width="5" height="1" fill="#0000ff"/><rect x="1120" y="170" width="6" height="1" fill="#0000ff"/><rect x="1126" y="171" width="5" height="1" fill="#0000ff"/><rect x="1131" y="172" width="6" height="1" fill="#0000ff"/><rect x="1137" y="173" width="6" height="1" fill="#0000ff"/><rect x="1143" y="174" width="5" height="1" fill="#0000ff"/><rect x="1148" y="175" width="6" height="1" fill="#0000ff"/><rect x="1154" y="176" width="5" height="1" fill="#0000ff"/><rect x="1159" y="177" width="6" height="1" fill="#0000ff"/><rect x="1165" y="178" width="5" height="1" fill="#0000ff"/><rect x="1170" y="179" width="6" height="1" fill="#0000ff"/><rect x="1176" y="180" width="6" height="1" fill="#0000ff"/><rect x="1182" y="181" width="5" height="1" fill="#0000ff"/><rect x="1187" y="182" width="6" height="1" fill="#0000ff"/><rect x="1193" y="183" width="5" height="1" fill="#0000ff"/><rect x="1198" y="184" width="6" height="1" fill="#0000ff"/><rect x="1204" y="185" width="6" height="1" fill="#0000ff"/><rect x="1210" y="186" width="5" height="1" fill="#0000ff"/><rect x="1215" y="187" width="6" height="1" fill="#0000ff"/><rect x="1221" y="188" width="5" height="1" fill="#0000ff"/><rect x="1226" y="189" width="6" height="1" fill="#0000ff"/><rect x="1232" y="190" width="5" height="1" fill="#0000ff"/><rect x="1237" y="191" width="6" height="1" fill="#0000ff"/><rect x="1243" y="192" width="6" height="1" fill="#0000ff"/><rect x="1249" y="193" width="5" height="1" fill="#0000ff"/><rect x="1254" y="194" width="6" height="1" fill="#0000ff"/><rect x="1260" y="195" width="5" height="1" fill="#0000ff"/><rect x="1265" y="196" width="6" height="1" fill="#0000ff"/><rect x="1271" y="197" width="6" height="1" fill="#0000ff"/><rect x="1277" y="198" width="5" height="1" fill="#0000ff"/><rect x="1282" y="199" width="6" height="1" fill="#0000ff"/><rect x="1288" y="200" width="5" height="1" fill="#0000ff"/><rect x="1293" y="201" width="6" height="1" fill="#0000ff"/><rect x="1299" y="202" width="5" height="1" fill="#0000ff"/><rect x="1304" y="203" width="6" height="1" fill="#0000ff"/><rect x="1310" y="204" width="6" height="1" fill="#0000ff"/><rect x="1316" y="205" width="5" height="1" fill="#0000ff"/><rect x="1321" y="206" width="6" height="1" fill="#0000ff"/><rect x="1327" y="207" width="2" height="1" fill="#0000ff"/><rect x="12.5" y="81.5" width="1317" height="458" fill="none" stroke="#fff"/><path d="M1060 82 h10 l-5 5z" fill="#8090a4" shape-rendering="geometricPrecision"/></svg><div class="t" style="left:17px;top:84px;font-size:10px;color:#fff;transform:scaleX(0.93);transform-origin:0 0;-webkit-text-stroke:0.2px #fff;">EURJPY,H4&nbsp;&nbsp;123.236 123.253 123.045 123.169</div><div class="t" style="left:1335px;top:101px;font-size:10px;color:#fff;transform:scaleX(0.92);transform-origin:0 0;-webkit-text-stroke:0.2px #fff;">127.590</div><div class="t" style="left:1335px;top:134px;font-size:10px;color:#fff;transform:scaleX(0.92);transform-origin:0 0;-webkit-text-stroke:0.2px #fff;">126.230</div><div class="t" style="left:1335px;top:167px;font-size:10px;color:#fff;transform:scaleX(0.92);transform-origin:0 0;-webkit-text-stroke:0.2px #fff;">124.910</div><div class="t" style="left:1335px;top:200px;font-size:10px;color:#fff;transform:scaleX(0.92);transform-origin:0 0;-webkit-text-stroke:0.2px #fff;">123.590</div><div class="t" style="left:1335px;top:233px;font-size:10px;color:#fff;transform:scaleX(0.92);transform-origin:0 0;-webkit-text-stroke:0.2px #fff;">122.270</div><div class="t" style="left:1335px;top:266px;font-size:10px;color:#fff;transform:scaleX(0.92);transform-origin:0 0;-webkit-text-stroke:0.2px #fff;">120.910</div><div class="t" style="left:1335px;top:299px;font-size:10px;color:#fff;transform:scaleX(0.92);transform-origin:0 0;-webkit-text-stroke:0.2px #fff;">119.590</div><div class="t" style="left:1335px;top:332px;font-size:10px;color:#fff;transform:scaleX(0.92);transform-origin:0 0;-webkit-text-stroke:0.2px #fff;">118.270</div><div class="t" style="left:1335px;top:365px;font-size:10px;color:#fff;transform:scaleX(0.92);transform-origin:0 0;-webkit-text-stroke:0.2px #fff;">116.950</div><div class="t" style="left:1335px;top:398px;font-size:10px;color:#fff;transform:scaleX(0.92);transform-origin:0 0;-webkit-text-stroke:0.2px #fff;">115.590</div><div class="t" style="left:1335px;top:431px;font-size:10px;color:#fff;transform:scaleX(0.92);transform-origin:0 0;-webkit-text-stroke:0.2px #fff;">114.270</div><div class="t" style="left:1335px;top:464px;font-size:10px;color:#fff;transform:scaleX(0.92);transform-origin:0 0;-webkit-text-stroke:0.2px #fff;">112.950</div><div class="t" style="left:1335px;top:497px;font-size:10px;color:#fff;transform:scaleX(0.92);transform-origin:0 0;-webkit-text-stroke:0.2px #fff;">111.630</div><div class="t" style="left:1335px;top:530px;font-size:10px;color:#fff;transform:scaleX(0.92);transform-origin:0 0;-webkit-text-stroke:0.2px #fff;">110.310</div><div class="b" style="left:1331px;top:210px;width:41px;height:12px;background:#fff;"></div><div class="t" style="left:1335px;top:210px;font-size:10px;color:#000;transform:scaleX(0.92);transform-origin:0 0;">123.169</div><div class="t" style="left:12px;top:543px;font-size:10px;color:#fff;transform:scaleX(0.917);transform-origin:0 0;-webkit-text-stroke:0.2px #fff;">20 Dec 2012</div><div class="t" style="left:76px;top:543px;font-size:10px;color:#fff;transform:scaleX(0.917);transform-origin:0 0;-webkit-text-stroke:0.2px #fff;">26 Dec 12:00</div><div class="t" style="left:140px;top:543px;font-size:10px;color:#fff;transform:scaleX(0.917);transform-origin:0 0;-webkit-text-stroke:0.2px #fff;">31 Dec 04:00</div><div class="t" style="left:204px;top:543px;font-size:10px;color:#fff;transform:scaleX(0.917);transform-origin:0 0;-webkit-text-stroke:0.2px #fff;">4 Jan 08:00</div><div class="t" style="left:268px;top:543px;font-size:10px;color:#fff;transform:scaleX(0.917);transform-origin:0 0;-webkit-text-stroke:0.2px #fff;">9 Jan 00:00</div><div class="t" style="left:332px;top:543px;font-size:10px;color:#fff;transform:scaleX(0.917);transform-origin:0 0;-webkit-text-stroke:0.2px #fff;">11 Jan 16:00</div><div class="t" style="left:396px;top:543px;font-size:10px;color:#fff;transform:scaleX(0.917);transform-origin:0 0;-webkit-text-stroke:0.2px #fff;">16 Jan 08:00</div><div class="t" style="left:460px;top:543px;font-size:10px;color:#fff;transform:scaleX(0.917);transform-origin:0 0;-webkit-text-stroke:0.2px #fff;">21 Jan 00:00</div><div class="t" style="left:524px;top:543px;font-size:10px;color:#fff;transform:scaleX(0.917);transform-origin:0 0;-webkit-text-stroke:0.2px #fff;">23 Jan 16:00</div><div class="t" style="left:588px;top:543px;font-size:10px;color:#fff;transform:scaleX(0.917);transform-origin:0 0;-webkit-text-stroke:0.2px #fff;">28 Jan 08:00</div><div class="t" style="left:652px;top:543px;font-size:10px;color:#fff;transform:scaleX(0.917);transform-origin:0 0;-webkit-text-stroke:0.2px #fff;">31 Jan 00:00</div><div class="t" style="left:716px;top:543px;font-size:10px;color:#fff;transform:scaleX(0.917);transform-origin:0 0;-webkit-text-stroke:0.2px #fff;">4 Feb 16:00</div><div class="t" style="left:780px;top:543px;font-size:10px;color:#fff;transform:scaleX(0.917);transform-origin:0 0;-webkit-text-stroke:0.2px #fff;">7 Feb 08:00</div><div class="t" style="left:844px;top:543px;font-size:10px;color:#fff;transform:scaleX(0.917);transform-origin:0 0;-webkit-text-stroke:0.2px #fff;">12 Feb 00:00</div><div class="t" style="left:908px;top:543px;font-size:10px;color:#fff;transform:scaleX(0.917);transform-origin:0 0;-webkit-text-stroke:0.2px #fff;">14 Feb 16:00</div><div class="t" style="left:972px;top:543px;font-size:10px;color:#fff;transform:scaleX(0.917);transform-origin:0 0;-webkit-text-stroke:0.2px #fff;">19 Feb 08:00</div><div class="t" style="left:1036px;top:543px;font-size:10px;color:#fff;transform:scaleX(0.917);transform-origin:0 0;-webkit-text-stroke:0.2px #fff;">22 Feb 00:00</div><div class="b" style="left:8px;top:559px;width:1366px;height:1px;background:#000;"></div><div class="b" style="left:8px;top:560px;width:1366px;height:20px;background:#f0f0f0;"></div><div class="b" style="left:8px;top:560px;width:1px;height:19px;background:#fff;"></div><div class="b" style="left:9px;top:560px;width:1px;height:19px;background:#a0a0a0;"></div><div class="b" style="left:8px;top:579px;width:1366px;height:1px;background:#fff;"></div><div class="t" style="left:23px;top:562px;font-size:10.5px;color:#50506a;transform:scaleX(0.95);transform-origin:0 0;">EURUSD,M30</div><div class="b" style="left:100px;top:563px;width:1px;height:12px;background:#505050;"></div><div class="t" style="left:109px;top:562px;font-size:10.5px;color:#50506a;transform:scaleX(0.95);transform-origin:0 0;">EURGBP,M30</div><div class="b" style="left:184px;top:563px;width:1px;height:12px;background:#505050;"></div><div class="t" style="left:195px;top:562px;font-size:10.5px;color:#50506a;transform:scaleX(0.95);transform-origin:0 0;">EURJPY,M30</div><div class="b" style="left:269px;top:563px;width:1px;height:12px;background:#505050;"></div><div class="t" style="left:278px;top:562px;font-size:10.5px;color:#50506a;transform:scaleX(0.95);transform-origin:0 0;">USDCAD,M30</div><div class="b" style="left:356px;top:563px;width:1px;height:12px;background:#505050;"></div><div class="t" style="left:366px;top:562px;font-size:10.5px;color:#50506a;transform:scaleX(0.95);transform-origin:0 0;">USDJPY,M30</div><div class="b" style="left:441px;top:563px;width:1px;height:12px;background:#505050;"></div><div class="t" style="left:451px;top:562px;font-size:10.5px;color:#50506a;transform:scaleX(0.95);transform-origin:0 0;">USDCHF,M30</div><div class="b" style="left:528px;top:563px;width:1px;height:12px;background:#505050;"></div><div class="t" style="left:538px;top:562px;font-size:10.5px;color:#50506a;transform:scaleX(0.95);transform-origin:0 0;">GBPUSD,M30</div><div class="b" style="left:613px;top:563px;width:1px;height:12px;background:#505050;"></div><div class="t" style="left:623px;top:562px;font-size:10.5px;color:#50506a;transform:scaleX(0.95);transform-origin:0 0;">GBPJPY,M30</div><div class="b" style="left:695px;top:563px;width:1px;height:12px;background:#505050;"></div><div class="t" style="left:706px;top:562px;font-size:10.5px;color:#50506a;transform:scaleX(0.95);transform-origin:0 0;">AUDUSD,M30</div><div class="b" style="left:784px;top:563px;width:1px;height:12px;background:#505050;"></div><div class="t" style="left:794px;top:562px;font-size:10.5px;color:#50506a;transform:scaleX(0.95);transform-origin:0 0;">AUDJPY,M30</div><div class="b" style="left:869px;top:563px;width:1px;height:12px;background:#505050;"></div><div class="t" style="left:879px;top:562px;font-size:10.5px;color:#50506a;transform:scaleX(0.95);transform-origin:0 0;">NZDUSD,M30</div><div class="b" style="left:955px;top:563px;width:1px;height:12px;background:#505050;"></div><div class="t" style="left:965px;top:562px;font-size:10.5px;color:#50506a;transform:scaleX(0.95);transform-origin:0 0;">NZDJPY,M30</div><div class="b" style="left:1040px;top:563px;width:1px;height:12px;background:#505050;"></div><div class="t" style="left:1051px;top:562px;font-size:10.5px;color:#50506a;transform:scaleX(0.95);transform-origin:0 0;">XAGUSD,M30</div><div class="b" style="left:1128px;top:563px;width:1px;height:12px;background:#505050;"></div><div class="t" style="left:1138px;top:562px;font-size:10.5px;color:#50506a;transform:scaleX(0.95);transform-origin:0 0;">XAUUSD,H4</div><div class="b" style="left:1208px;top:559px;width:76px;height:19px;background:#fff;border:1px solid #000;border-top:none;box-sizing:border-box;"></div><div class="t" style="left:1218px;top:562px;font-size:10.5px;color:#000;transform:scaleX(0.975);transform-origin:0 0;">EURJPY,H4</div><svg class="b" style="left:1340px;top:563px" width="30" height="10"><path d="M9 1 l-4 4 l4 4z M21 1 l4 4 l-4 4z" fill="#909090"/></svg><div class="b" style="left:8px;top:580px;width:1366px;height:136px;background:#f0f0f0;"></div><div class="b" style="left:8px;top:580px;width:1px;height:136px;background:#fff;"></div><div class="b" style="left:9px;top:597px;width:13px;height:115px;background:linear-gradient(#d8e4f0,#c4d0de);"></div><svg class="b" style="left:12px;top:586px" width="7" height="6"><path d="M0.5 0.5 L6.5 5.5 M6.5 0.5 L0.5 5.5" stroke="#000" stroke-width="1.6"/></svg><div class="t" style="left:10px;top:710px;font-size:11px;color:#5f6f80;transform:rotate(-90deg) scaleX(0.97);transform-origin:0 0;">Терминал</div><div class="b" style="left:23px;top:583px;width:1349px;height:108px;background:#fff;"></div><div class="b" style="left:23px;top:583px;width:1348px;height:24px;background:linear-gradient(#fff 0%,#fff 42%,#f1f3f6 46%,#eceef1 100%);border-top:1px solid #a8a8a8;border-bottom:1px solid #d8d8d8;box-sizing:border-box;"></div><div class="b" style="left:23px;top:583px;width:1px;height:108px;background:#a8a8a8;"></div><div class="b" style="left:156px;top:584px;width:1px;height:22px;background:#e3e3e3;"></div><div class="b" style="left:382px;top:584px;width:1px;height:22px;background:#e3e3e3;"></div><div class="b" style="left:474px;top:584px;width:1px;height:22px;background:#e3e3e3;"></div><div class="b" style="left:545px;top:584px;width:1px;height:22px;background:#e3e3e3;"></div><div class="b" style="left:636px;top:584px;width:1px;height:22px;background:#e3e3e3;"></div><div class="b" style="left:739px;top:584px;width:1px;height:22px;background:#e3e3e3;"></div><div class="b" style="left:842px;top:584px;width:1px;height:22px;background:#e3e3e3;"></div><div class="b" style="left:943px;top:584px;width:1px;height:22px;background:#e3e3e3;"></div><div class="b" style="left:1045px;top:584px;width:1px;height:22px;background:#e3e3e3;"></div><div class="b" style="left:1147px;top:584px;width:1px;height:22px;background:#e3e3e3;"></div><div class="b" style="left:1249px;top:584px;width:1px;height:22px;background:#e3e3e3;"></div><div class="b" style="left:1369px;top:584px;width:1px;height:22px;background:#e3e3e3;"></div><div class="t" style="left:30px;top:590px;font-size:11px;color:#000;">Ордер</div><svg class="b" style="left:76px;top:593px" width="9" height="8"><path d="M1 7.5 L3.5 1" stroke="#666"/><path d="M4 7.5 L6 3 L8 7.5z" fill="none" stroke="#ddd"/></svg><div class="t" style="right:1005px;top:590px;font-size:11px;color:#000;">Время</div><div class="t" style="right:913px;top:590px;font-size:11px;color:#000;">Тип</div><div class="t" style="right:842px;top:590px;font-size:11px;color:#000;">Объём</div><div class="t" style="right:750px;top:590px;font-size:11px;color:#000;">Символ</div><div class="t" style="right:648px;top:590px;font-size:11px;color:#000;">Цена</div><div class="t" style="right:546px;top:590px;font-size:11px;color:#000;">S / L</div><div class="t" style="right:444px;top:590px;font-size:11px;color:#000;">T / P</div><div class="t" style="right:342px;top:590px;font-size:11px;color:#000;">Цена</div><div class="t" style="right:241px;top:590px;font-size:11px;color:#000;">Комиссия</div><div class="t" style="right:138px;top:590px;font-size:11px;color:#000;">Своп</div><div class="t" style="right:18px;top:590px;font-size:11px;color:#000;">Прибыль</div><div class="b" style="left:24px;top:608px;width:1347px;height:20px;background:#c8c8c8;"></div><svg class="b" style="left:30px;top:614px" width="9" height="9"><circle cx="4.5" cy="4.5" r="3.3" fill="#b8b8b8" stroke="#7a7a7a" stroke-width="1.2"/><path d="M2.5 6.5 L6.5 2.5" stroke="#eee"/></svg><div class="t" style="left:49px;top:612px;font-size:11px;color:#000;font-weight:bold;transform:scaleX(0.955);transform-origin:0 0;">Баланс: 0.00&nbsp;&nbsp;Средства: 0.00&nbsp;&nbsp;Свободно: 0.00</div><div class="t" style="right:16px;top:612px;font-size:11px;color:#000;font-weight:bold;">0.00</div><div class="b" style="left:92px;top:691px;width:1278px;height:1px;background:#000;"></div><div class="b" style="left:23px;top:692px;width:1349px;height:20px;background:#f0f0f0;"></div><div class="b" style="left:25px;top:691px;width:68px;height:18px;background:#fff;border:1px solid #000;border-top:none;box-sizing:border-box;"></div><div class="t" style="left:35px;top:695px;font-size:11px;color:#000;">Торговля</div><div class="t" style="left:102px;top:695px;font-size:11px;color:#606070;">История Счета</div><div class="b" style="left:189px;top:695px;width:1px;height:12px;background:#505050;"></div><div class="t" style="left:198px;top:695px;font-size:11px;color:#606070;">Новости</div><div class="b" style="left:250px;top:695px;width:1px;height:12px;background:#505050;"></div><div class="t" style="left:260px;top:695px;font-size:11px;color:#606070;">Алерты</div><div class="b" style="left:309px;top:695px;width:1px;height:12px;background:#505050;"></div><div class="t" style="left:319px;top:695px;font-size:11px;color:#606070;">Почтовый ящик</div><div class="b" style="left:411px;top:695px;width:1px;height:12px;background:#505050;"></div><div class="t" style="left:420px;top:695px;font-size:11px;color:#606070;">Сигналы</div><div class="b" style="left:475px;top:695px;width:1px;height:12px;background:#505050;"></div><div class="t" style="left:484px;top:695px;font-size:11px;color:#606070;">Журнал</div><div class="b" style="left:535px;top:695px;width:1px;height:12px;background:#505050;"></div><div class="b" style="left:8px;top:714px;width:1366px;height:1px;background:#a0a0a0;"></div><div class="b" style="left:8px;top:715px;width:1366px;height:1px;background:#fff;"></div><div class="b" style="left:8px;top:716px;width:1366px;height:20px;background:#f0f0f0;"></div><div class="t" style="left:10px;top:721px;font-size:11.5px;color:#000;">Для справки, нажмите F1</div><div class="b" style="left:648px;top:718px;width:1px;height:16px;background:#a0a0a0;"></div><div class="b" style="left:764px;top:718px;width:1px;height:16px;background:#a0a0a0;"></div><div class="b" style="left:866px;top:718px;width:1px;height:16px;background:#a0a0a0;"></div><div class="b" style="left:937px;top:718px;width:1px;height:16px;background:#a0a0a0;"></div><div class="b" style="left:1008px;top:718px;width:1px;height:16px;background:#a0a0a0;"></div><div class="b" style="left:1076px;top:718px;width:1px;height:16px;background:#a0a0a0;"></div><div class="b" style="left:1146px;top:718px;width:1px;height:16px;background:#a0a0a0;"></div><div class="b" style="left:1212px;top:718px;width:1px;height:16px;background:#a0a0a0;"></div><div class="t" style="left:654px;top:721px;font-size:11.5px;color:#000;">Default</div><svg class="b" style="left:1218px;top:721px" width="26" height="13"><rect x="0" y="0" width="2" height="9" fill="#4a7a10"/><rect x="0" y="10" width="2" height="2" fill="#a01010"/><rect x="3" y="0" width="2" height="8" fill="#4a7a10"/><rect x="3" y="9" width="2" height="3" fill="#a01010"/><rect x="6" y="0" width="2" height="7" fill="#4a7a10"/><rect x="6" y="8" width="2" height="4" fill="#a01010"/><rect x="9" y="0" width="2" height="6" fill="#4a7a10"/><rect x="9" y="7" width="2" height="5" fill="#a01010"/><rect x="12" y="0" width="2" height="5" fill="#4a7a10"/><rect x="12" y="6" width="2" height="6" fill="#a01010"/><rect x="15" y="0" width="2" height="4" fill="#4a7a10"/><rect x="15" y="5" width="2" height="7" fill="#a01010"/><rect x="18" y="0" width="2" height="3" fill="#4a7a10"/><rect x="18" y="4" width="2" height="8" fill="#a01010"/><rect x="21" y="0" width="2" height="2" fill="#4a7a10"/><rect x="21" y="3" width="2" height="9" fill="#a01010"/></svg><div class="t" style="left:1277px;top:721px;font-size:11.5px;color:#000;">130/0 kb</div><svg class="b" style="left:1358px;top:720px" width="16" height="16"><path d="M15.5 1 L1 15.5 M15.5 6 L6 15.5 M15.5 11 L11 15.5" stroke="#8a8a8a" stroke-width="1.2"/><path d="M15.5 3 L3 15.5 M15.5 8 L8 15.5 M15.5 13 L13 15.5" stroke="#fff" stroke-width="1"/></svg><div class="b" style="left:8px;top:737px;width:1366px;height:7px;background:linear-gradient(#2a2a2a,#3a3a3a 60%,#2e2e2e);"></div><div class="b" style="left:8px;top:736px;width:1366px;height:1px;background:#b0b0b0;"></div><div class="b" style="left:1360px;top:737px;width:14px;height:7px;background:linear-gradient(#9a9a9a,#5a5a5a);border:1px solid #b0b0b0;box-sizing:border-box;"></div><svg class="b" style="left:0;top:736px" width="300" height="8"><ellipse cx="35" cy="14" rx="13" ry="12" fill="#c8d8e0" stroke="#1a3a8a" stroke-width="1.2"/><ellipse cx="100" cy="14" rx="13" ry="12" fill="#7ab0e0"/><rect x="130" y="1" width="58" height="8" rx="2" fill="url(#tb1)" stroke="#9a9a9a"/><circle cx="158" cy="10" r="6" fill="#e08a20"/><rect x="192" y="1" width="58" height="8" rx="2" fill="url(#tb2)" stroke="#c0c0c0"/><rect x="206.5" y="3.5" width="31" height="6" rx="2" fill="#9ac0e8" stroke="#3a78c8"/><defs><linearGradient id="tb1" x1="0" y1="0" x2="0" y2="1"><stop offset="0" stop-color="#8a8a8a"/><stop offset="1" stop-color="#5a5a5a"/></linearGradient><linearGradient id="tb2" x1="0" y1="0" x2="0" y2="1"><stop offset="0" stop-color="#c8c8c8"/><stop offset="1" stop-color="#8a8a8a"/></linearGradient></defs></svg>
</body></html>
